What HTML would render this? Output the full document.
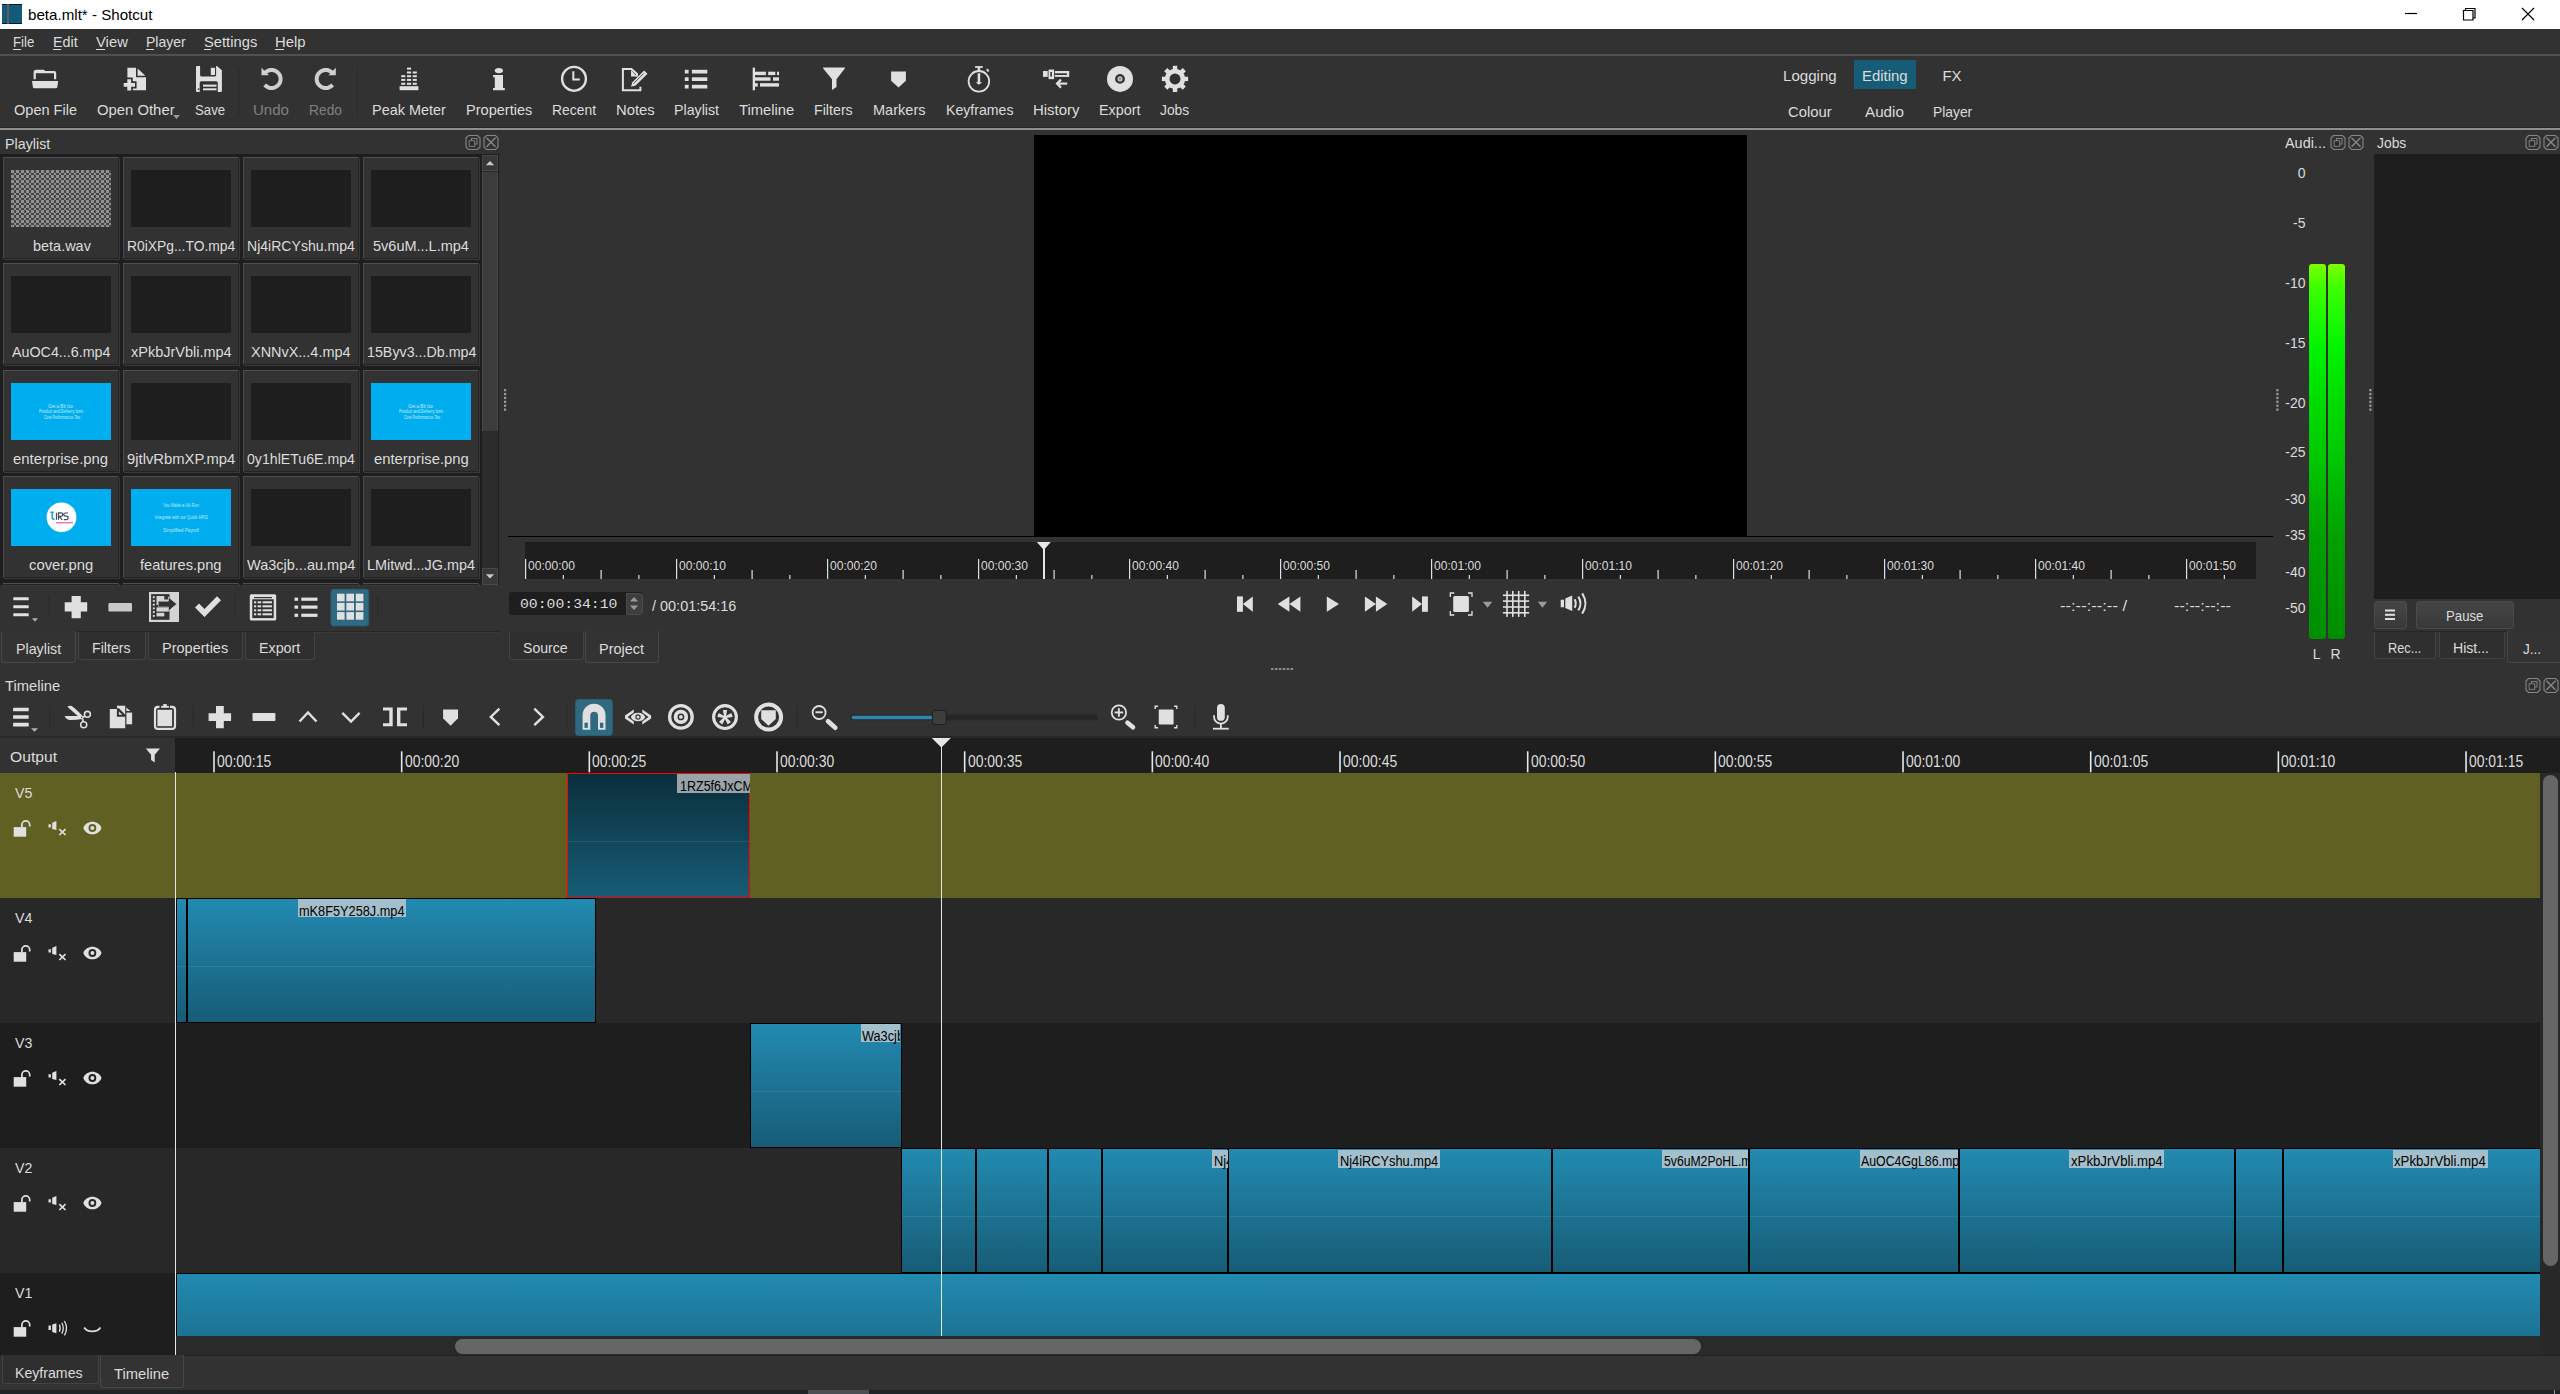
<!DOCTYPE html>
<html><head><meta charset="utf-8">
<style>
*{margin:0;padding:0;box-sizing:border-box}
html,body{width:2560px;height:1394px;overflow:hidden;background:#323232;font-family:"Liberation Sans",sans-serif;color:#dcdcdc;font-size:15px}
.a{position:absolute}
.t{position:absolute;white-space:nowrap;line-height:1}
svg{position:absolute;overflow:visible}
.ic{fill:#dedede}
.ics{fill:none;stroke:#dedede}

</style></head><body>
<div class="a" style="left:0px;top:0px;width:2560px;height:29px;background:#fff;"></div>
<div class="a" style="left:2px;top:4px;width:20px;height:20px;background:#135a78;"></div>
<div class="a" style="left:2px;top:4px;width:20px;height:1px;background:#021a26;"></div>
<div class="a" style="left:2px;top:23px;width:20px;height:1px;background:#021a26;"></div>
<div class="a" style="left:7.1px;top:4px;width:1.7px;height:20px;background:#5e5e5e;"></div>
<div class="t" id="q9a3580f8" style="left:27.50px;top:7.30px;font-size:15px;color:#000;transform:scaleX(1.0089);transform-origin:0 0;">beta.mlt* - Shotcut</div>
<svg style="left:2400px;top:0px" width="140" height="29" viewBox="0 0 140 29"><path d="M5 13.5h12" stroke="#000" stroke-width="1.2"/><path d="M63.5 10.5h9.5v9.5h-9.5z" fill="none" stroke="#000" stroke-width="1.2"/><path d="M65.5 10.5v-2h9.5v9.5h-2" fill="none" stroke="#000" stroke-width="1.2"/><path d="M122 8l12 12M134 8l-12 12" stroke="#000" stroke-width="1.2"/></svg>
<div class="a" style="left:0px;top:29px;width:2560px;height:26px;background:#323232;"></div>
<div class="a" style="left:0px;top:54px;width:2560px;height:2px;background:#505050;"></div>
<div class="t" id="qcb225d25" style="left:13.00px;top:34.20px;font-size:15px;color:#dcdcdc;transform:scaleX(0.8853);transform-origin:0 0;">File</div>
<div class="t" id="q77d34b90" style="left:53.10px;top:34.20px;font-size:15px;color:#dcdcdc;transform:scaleX(0.9532);transform-origin:0 0;">Edit</div>
<div class="t" id="q8d62c638" style="left:96.25px;top:34.20px;font-size:15px;color:#dcdcdc;transform:scaleX(0.9876);transform-origin:0 0;">View</div>
<div class="t" id="qefdce4ab" style="left:146.25px;top:34.20px;font-size:15px;color:#dcdcdc;transform:scaleX(0.9346);transform-origin:0 0;">Player</div>
<div class="t" id="q4b291cfc" style="left:204.00px;top:34.20px;font-size:15px;color:#dcdcdc;transform:scaleX(0.9824);transform-origin:0 0;">Settings</div>
<div class="t" id="q005b2135" style="left:275.00px;top:34.20px;font-size:15px;color:#dcdcdc;transform:scaleX(0.9916);transform-origin:0 0;">Help</div>
<div class="a" style="left:13px;top:48.5px;width:8px;height:1.2px;background:#dcdcdc;"></div>
<div class="a" style="left:53px;top:48.5px;width:8px;height:1.2px;background:#dcdcdc;"></div>
<div class="a" style="left:96px;top:48.5px;width:9px;height:1.2px;background:#dcdcdc;"></div>
<div class="a" style="left:146px;top:48.5px;width:8px;height:1.2px;background:#dcdcdc;"></div>
<div class="a" style="left:204px;top:48.5px;width:7px;height:1.2px;background:#dcdcdc;"></div>
<div class="a" style="left:275px;top:48.5px;width:9px;height:1.2px;background:#dcdcdc;"></div>
<div class="a" style="left:0px;top:56px;width:2560px;height:72px;background:#323232;"></div>
<div class="a" style="left:0px;top:127px;width:2560px;height:1px;background:#262626;"></div>
<div class="a" style="left:0px;top:128px;width:2560px;height:2px;background:#8f8f8f;"></div>
<div class="t" id="q5729dce9" style="left:14.10px;top:102.10px;font-size:15px;color:#dcdcdc;transform:scaleX(0.9685);transform-origin:0 0;">Open File</div>
<div class="t" id="q4e3dcf3e" style="left:96.80px;top:102.10px;font-size:15px;color:#dcdcdc;transform:scaleX(0.9899);transform-origin:0 0;">Open Other</div>
<div class="t" id="qcde547c8" style="left:194.50px;top:102.10px;font-size:15px;color:#dcdcdc;transform:scaleX(0.8800);transform-origin:0 0;">Save</div>
<div class="t" id="q9c9b54ea" style="left:253.10px;top:102.10px;font-size:15px;color:#808080;transform:scaleX(1.0011);transform-origin:0 0;">Undo</div>
<div class="t" id="q52b96bfa" style="left:309.40px;top:102.10px;font-size:15px;color:#808080;transform:scaleX(0.9203);transform-origin:0 0;">Redo</div>
<div class="t" id="q475070a4" style="left:372.00px;top:102.10px;font-size:15px;color:#dcdcdc;transform:scaleX(0.9622);transform-origin:0 0;">Peak Meter</div>
<div class="t" id="q4601468b" style="left:465.50px;top:102.10px;font-size:15px;color:#dcdcdc;transform:scaleX(0.9697);transform-origin:0 0;">Properties</div>
<div class="t" id="q35376d26" style="left:552.00px;top:102.10px;font-size:15px;color:#dcdcdc;transform:scaleX(0.9257);transform-origin:0 0;">Recent</div>
<div class="t" id="qe7d1623c" style="left:615.50px;top:102.10px;font-size:15px;color:#dcdcdc;transform:scaleX(0.9888);transform-origin:0 0;">Notes</div>
<div class="t" id="q750ee475" style="left:674.25px;top:102.10px;font-size:15px;color:#dcdcdc;transform:scaleX(0.9471);transform-origin:0 0;">Playlist</div>
<div class="t" id="qa7fbe4f7" style="left:739.25px;top:102.10px;font-size:15px;color:#dcdcdc;transform:scaleX(0.9841);transform-origin:0 0;">Timeline</div>
<div class="t" id="q50867fec" style="left:814.25px;top:102.10px;font-size:15px;color:#dcdcdc;transform:scaleX(0.9487);transform-origin:0 0;">Filters</div>
<div class="t" id="q155d610d" style="left:873.00px;top:102.10px;font-size:15px;color:#dcdcdc;transform:scaleX(0.9691);transform-origin:0 0;">Markers</div>
<div class="t" id="q13014522" style="left:945.50px;top:102.10px;font-size:15px;color:#dcdcdc;transform:scaleX(0.9414);transform-origin:0 0;">Keyframes</div>
<div class="t" id="q5b00b464" style="left:1033.00px;top:102.10px;font-size:15px;color:#dcdcdc;transform:scaleX(0.9963);transform-origin:0 0;">History</div>
<div class="t" id="q9d05fb1b" style="left:1099.25px;top:102.10px;font-size:15px;color:#dcdcdc;transform:scaleX(0.9571);transform-origin:0 0;">Export</div>
<div class="t" id="qbf7a2658" style="left:1160.00px;top:102.10px;font-size:15px;color:#dcdcdc;transform:scaleX(0.9231);transform-origin:0 0;">Jobs</div>
<svg style="left:173px;top:115px" width="8" height="5" viewBox="0 0 8 5"><path d="M0 0h7l-3.5 4z" fill="#9a9a9a"/></svg>
<div class="a" style="left:238px;top:68px;width:1px;height:48px;background:#2a2a2a;"></div>
<div class="a" style="left:357px;top:68px;width:1px;height:48px;background:#2a2a2a;"></div>
<div class="a" style="left:1854px;top:60px;width:62px;height:29px;background:#175c76;"></div>
<div class="t" id="q4f8a7337" style="left:1783.00px;top:67.90px;font-size:15px;color:#dcdcdc;transform:scaleX(1.0058);transform-origin:0 0;">Logging</div>
<div class="t" id="q995e0ed6" style="left:1862.00px;top:67.90px;font-size:15px;color:#dcdcdc;transform:scaleX(0.9940);transform-origin:0 0;">Editing</div>
<div class="t" id="q6a49b300" style="left:1942.40px;top:67.90px;font-size:15px;color:#dcdcdc;">FX</div>
<div class="t" id="q48e153c5" style="left:1788.00px;top:104.20px;font-size:15px;color:#dcdcdc;transform:scaleX(0.9890);transform-origin:0 0;">Colour</div>
<div class="t" id="q972988d2" style="left:1865.30px;top:104.20px;font-size:15px;color:#dcdcdc;transform:scaleX(1.0137);transform-origin:0 0;">Audio</div>
<div class="t" id="qefdce4ab" style="left:1932.80px;top:104.20px;font-size:15px;color:#dcdcdc;transform:scaleX(0.9217);transform-origin:0 0;">Player</div>
<svg style="left:0px;top:0px" width="1300" height="130" viewBox="0 0 1300 130"><path d="M34.6 79V72.5a1.5 1.5 0 0 1 1.5-1.5H45l0 0 M34.6 79" fill="none"/><path d="M33.6 79.2V72.4q0-2.7 2.7-2.7h6.5q2.2 0 2.2 1.3h9.2q2 0 2 2v6.2h-2.2v-6h-18.2v6z" fill="#e0e0e0"/><path d="M32 80.9h26.2l-0.9 6.2q-0.2 1.2-1.4 1.2h-21.6q-1.2 0-1.4-1.2z" fill="#e0e0e0"/><path d="M127.4 67.8h8.6v9.4h10v13h-18.6z" fill="#e0e0e0"/><path d="M137.6 68.6l7.8 7.2h-7.8z" fill="#e0e0e0"/><path d="M125.6 77.6h7.2v3.6h3.8v7.2h-3.8v3.6h-7.2v-3.6h-3.8v-7.2h3.8z" fill="#323232"/><path d="M127.3 79.3h3.8v3.7h3.9v3.7h-3.9v3.7h-3.8v-3.7h-3.6v-3.7h3.6z" fill="#e0e0e0"/><path d="M197 65.9h20l4.9 4.4v20.7q0 1-1 1h-23.9q-1 0-1-1v-24.1q0-1 1-1z" fill="#e0e0e0"/><path d="M200.1 65.9h16v9q0 1.5-1.5 1.5h-13q-1.5 0-1.5-1.5z" fill="#323232"/><rect x="210.8" y="67.8" width="4.2" height="7.2" fill="#e0e0e0"/><path d="M199.7 92v-9.3q0-1.5 1.5-1.5h15.1q1.5 0 1.5 1.5v9.3z" fill="#323232"/><rect x="203" y="84.6" width="13.5" height="2.1" fill="#e0e0e0"/><rect x="203" y="88.3" width="13.5" height="2" fill="#e0e0e0"/><circle cx="198.5" cy="89.1" r="0.9" fill="#323232"/><path d="M264.71 73.21 L265.46 72.42 L266.31 71.72 L267.24 71.13 L268.23 70.66 L269.27 70.31 L270.35 70.09 L271.44 70.00 L272.54 70.05 L273.62 70.23 L274.68 70.54 L275.69 70.98 L276.63 71.54 L277.50 72.21 L278.29 72.98 L278.97 73.84 L279.55 74.77 L280.00 75.77 L280.33 76.82 L280.53 77.90 L280.60 79.00 L280.53 80.10 L280.33 81.18 L280.00 82.23 L279.55 83.23 L278.97 84.16 L278.29 85.02 L277.50 85.79 L276.63 86.46 L275.69 87.02 L274.68 87.46 L273.62 87.77 L272.54 87.95 L271.44 88.00 L270.35 87.91 L269.27 87.69 L268.23 87.34 L267.24 86.87 L266.31 86.28 L265.46 85.58 L264.71 84.79" fill="none" stroke="#cfcfcf" stroke-width="4"/><path d="M261.5 67.8v7.4h7.4z" fill="#cfcfcf"/><path d="M332.59 73.21 L331.84 72.42 L330.99 71.72 L330.06 71.13 L329.07 70.66 L328.03 70.31 L326.95 70.09 L325.86 70.00 L324.76 70.05 L323.68 70.23 L322.62 70.54 L321.61 70.98 L320.67 71.54 L319.80 72.21 L319.01 72.98 L318.33 73.84 L317.75 74.77 L317.30 75.77 L316.97 76.82 L316.77 77.90 L316.70 79.00 L316.77 80.10 L316.97 81.18 L317.30 82.23 L317.75 83.23 L318.33 84.16 L319.01 85.02 L319.80 85.79 L320.67 86.46 L321.61 87.02 L322.62 87.46 L323.68 87.77 L324.76 87.95 L325.86 88.00 L326.95 87.91 L328.03 87.69 L329.07 87.34 L330.06 86.87 L330.99 86.28 L331.84 85.58 L332.59 84.79" fill="none" stroke="#cfcfcf" stroke-width="4"/><path d="M335.8 67.8v7.4h-7.4z" fill="#cfcfcf"/><rect x="399.6" y="86.2" width="18.8" height="4" fill="#e0e0e0"/><rect x="401.2" y="75.2" width="4.1" height="2" fill="#e0e0e0"/><rect x="401.2" y="78.9" width="4.1" height="2" fill="#e0e0e0"/><rect x="401.2" y="82.8" width="4.1" height="2" fill="#e0e0e0"/><rect x="407" y="67.6" width="4.1" height="2" fill="#e0e0e0"/><rect x="407" y="71.5" width="4.1" height="2" fill="#e0e0e0"/><rect x="407" y="75.2" width="4.1" height="2" fill="#e0e0e0"/><rect x="407" y="78.9" width="4.1" height="2" fill="#e0e0e0"/><rect x="407" y="82.8" width="4.1" height="2" fill="#e0e0e0"/><rect x="412.7" y="71.5" width="4.1" height="2" fill="#e0e0e0"/><rect x="412.7" y="75.2" width="4.1" height="2" fill="#e0e0e0"/><rect x="412.7" y="78.9" width="4.1" height="2" fill="#e0e0e0"/><rect x="412.7" y="82.8" width="4.1" height="2" fill="#e0e0e0"/><ellipse cx="498.9" cy="70.6" rx="4.1" ry="2.6" fill="#e0e0e0"/><path d="M493.1 75h9.9v13h1.8v2.2h-11.7v-2.2h1.7v-10.8h-1.7z" fill="#e0e0e0"/><circle cx="574" cy="78.8" r="11.9" fill="none" stroke="#e0e0e0" stroke-width="2.4"/><path d="M572.3 71.2h2v7.4h5.5v2h-7.5z" fill="#e0e0e0"/><path d="M637 76.5V74l-5.5-5H622.9v21.2h17.5v-3.5" fill="none" stroke="#e0e0e0" stroke-width="2"/><path d="M631 70v6.5h6z" fill="#e0e0e0"/><path d="M631 86.8l1.3-4.6 11.8-11.8 3.4 3.4-11.8 11.8z" fill="#e0e0e0"/><path d="M633.5 83.6l10-10" stroke="#323232" stroke-width="0.8"/><rect x="684.8" y="69.8" width="3.8" height="3.7" fill="#e0e0e0"/><rect x="691.9" y="69.8" width="15.4" height="3.7" fill="#e0e0e0"/><rect x="684.8" y="77.3" width="3.8" height="3.7" fill="#e0e0e0"/><rect x="691.9" y="77.3" width="15.4" height="3.7" fill="#e0e0e0"/><rect x="684.8" y="84.8" width="3.8" height="3.7" fill="#e0e0e0"/><rect x="691.9" y="84.8" width="15.4" height="3.7" fill="#e0e0e0"/><rect x="752.7" y="67.6" width="2.3" height="22.7" fill="#e0e0e0"/><rect x="755" y="71.7" width="10.9" height="3.4" fill="#e0e0e0"/><rect x="768.2" y="71.7" width="7.1" height="3.4" fill="#e0e0e0"/><rect x="777" y="71.7" width="2.0" height="3.4" fill="#e0e0e0"/><rect x="755" y="77.3" width="15.5" height="3.4" fill="#e0e0e0"/><rect x="773" y="77.3" width="6.0" height="3.4" fill="#e0e0e0"/><rect x="755" y="83.2" width="2.8" height="3.4" fill="#e0e0e0"/><rect x="760" y="83.2" width="19.0" height="3.4" fill="#e0e0e0"/><path d="M823.5 67.6h21q1 0 0.3 0.9l-8.3 10.8v7.6l-4.5 3.1v-10.7l-8.8-10.8q-0.6-0.9 0.3-0.9z" fill="#e0e0e0"/><path d="M891.1 71.4h14.8v9.4l-7.4 6.6-7.4-6.6z" fill="#e0e0e0"/><circle cx="978.9" cy="81.3" r="10.3" fill="none" stroke="#e0e0e0" stroke-width="1.8"/><rect x="975.1" y="66.1" width="7.6" height="1.8" fill="#e0e0e0"/><rect x="977.7" y="67.5" width="2.4" height="3.5" fill="#e0e0e0"/><path d="M986 69.8l1.8-1.2 1.6 2.3-1.5 1.2z" fill="#e0e0e0"/><path d="M977.7 73.2h2.5v9.1h2l-3.3 2.4-3.3-2.4h2.1z" fill="#e0e0e0"/><path d="M1043 71h26.2v5.9h-26.2z" fill="#e0e0e0"/><rect x="1054.6" y="73.3" width="12.3" height="1.7" fill="#323232"/><rect x="1048.1" y="69.1" width="6.4" height="10.5" fill="#e0e0e0" stroke="#323232" stroke-width="0.8"/><rect x="1050.3" y="72" width="1.6" height="4.6" fill="#323232"/><path d="M1067.2 83.6h-9" stroke="#e0e0e0" stroke-width="2.2"/><path d="M1061 79.6l-4 4 4 4" fill="none" stroke="#e0e0e0" stroke-width="2.2"/><circle cx="1120" cy="78.9" r="13" fill="#e0e0e0"/><circle cx="1120" cy="78.9" r="4.9" fill="#323232"/><circle cx="1120" cy="78.9" r="2.6" fill="#bdbdbd"/><circle cx="1120" cy="78.9" r="1" fill="#888"/><g transform="translate(1175 78.9)"><rect x="-2.2" y="-13.1" width="4.4" height="6" transform="rotate(0)" fill="#e0e0e0"/><rect x="-2.2" y="-13.1" width="4.4" height="6" transform="rotate(45)" fill="#e0e0e0"/><rect x="-2.2" y="-13.1" width="4.4" height="6" transform="rotate(90)" fill="#e0e0e0"/><rect x="-2.2" y="-13.1" width="4.4" height="6" transform="rotate(135)" fill="#e0e0e0"/><rect x="-2.2" y="-13.1" width="4.4" height="6" transform="rotate(180)" fill="#e0e0e0"/><rect x="-2.2" y="-13.1" width="4.4" height="6" transform="rotate(225)" fill="#e0e0e0"/><rect x="-2.2" y="-13.1" width="4.4" height="6" transform="rotate(270)" fill="#e0e0e0"/><rect x="-2.2" y="-13.1" width="4.4" height="6" transform="rotate(315)" fill="#e0e0e0"/><circle r="10.2" fill="#e0e0e0"/><circle r="5.5" fill="#323232"/></g></svg>
<div class="t" id="q750ee475" style="left:5.10px;top:135.60px;font-size:15px;color:#dcdcdc;transform:scaleX(0.9534);transform-origin:0 0;">Playlist</div>
<svg style="left:0px;top:0px" width="2560" height="160" viewBox="0 0 2560 160"><path d="M468.5 135.5h9l2.5 2.5v9l-2.5 2.5h-9l-2.5-2.5v-9z" fill="none" stroke="#8a8580" stroke-width="1.1"/><rect x="471.5" y="138.5" width="5.5" height="5.5" fill="none" stroke="#8a8580" stroke-width="0.9"/><rect x="469.2" y="140.8" width="5.5" height="5.5" fill="#2a2a2a" stroke="#8a8580" stroke-width="0.9"/><path d="M486.5 135.5h9l2.5 2.5v9l-2.5 2.5h-9l-2.5-2.5v-9z" fill="none" stroke="#8a8580" stroke-width="1.1"/><path d="M486.5 137.8l9 9M495.5 137.8l-9 9" stroke="#8a8580" stroke-width="1.5"/></svg>
<div class="a" style="left:0px;top:154px;width:499px;height:431px;background:#1e1e1e;"></div>
<div class="a" style="left:3px;top:157px;width:116px;height:102px;background:#323232;border-top:1px solid #4f4f4f;border-left:1px solid #4a4a4a;border-right:1px solid #232323;border-bottom:1px solid #232323;box-shadow:1px 1px 0 #393939"></div>
<svg style="left:11px;top:170px" width="100" height="57" viewBox="0 0 100 57"><defs><pattern id="chk" width="5" height="5" patternUnits="userSpaceOnUse"><rect width="5" height="5" fill="#464646"/><rect width="3" height="3" fill="#919191"/><rect x="3" y="3" width="2" height="2" fill="#919191"/></pattern></defs><rect width="100" height="57" fill="url(#chk)"/></svg>
<div class="t" id="q2521f215" style="left:32.50px;top:238.00px;font-size:15px;color:#dcdcdc;transform:scaleX(0.9642);transform-origin:0 0;">beta.wav</div>
<div class="a" style="left:123px;top:157px;width:116px;height:102px;background:#323232;border-top:1px solid #4f4f4f;border-left:1px solid #4a4a4a;border-right:1px solid #232323;border-bottom:1px solid #232323;box-shadow:1px 1px 0 #393939"></div>
<div class="a" style="left:131px;top:170px;width:100px;height:57px;background:#1e1e1e;"></div>
<div class="t" id="q131ded60" style="left:127.00px;top:238.00px;font-size:15px;color:#dcdcdc;transform:scaleX(0.9226);transform-origin:0 0;">R0iXPg...TO.mp4</div>
<div class="a" style="left:243px;top:157px;width:116px;height:102px;background:#323232;border-top:1px solid #4f4f4f;border-left:1px solid #4a4a4a;border-right:1px solid #232323;border-bottom:1px solid #232323;box-shadow:1px 1px 0 #393939"></div>
<div class="a" style="left:251px;top:170px;width:100px;height:57px;background:#1e1e1e;"></div>
<div class="t" id="q1f445431" style="left:247.20px;top:238.00px;font-size:15px;color:#dcdcdc;transform:scaleX(0.9370);transform-origin:0 0;">Nj4iRCYshu.mp4</div>
<div class="a" style="left:363px;top:157px;width:116px;height:102px;background:#323232;border-top:1px solid #4f4f4f;border-left:1px solid #4a4a4a;border-right:1px solid #232323;border-bottom:1px solid #232323;box-shadow:1px 1px 0 #393939"></div>
<div class="a" style="left:371px;top:170px;width:100px;height:57px;background:#1e1e1e;"></div>
<div class="t" id="qd4c21285" style="left:373.30px;top:238.00px;font-size:15px;color:#dcdcdc;transform:scaleX(0.9666);transform-origin:0 0;">5v6uM...L.mp4</div>
<div class="a" style="left:3px;top:263px;width:116px;height:102px;background:#323232;border-top:1px solid #4f4f4f;border-left:1px solid #4a4a4a;border-right:1px solid #232323;border-bottom:1px solid #232323;box-shadow:1px 1px 0 #393939"></div>
<div class="a" style="left:11px;top:276px;width:100px;height:57px;background:#1e1e1e;"></div>
<div class="t" id="q645292a2" style="left:11.80px;top:344.00px;font-size:15px;color:#dcdcdc;transform:scaleX(0.9527);transform-origin:0 0;">AuOC4...6.mp4</div>
<div class="a" style="left:123px;top:263px;width:116px;height:102px;background:#323232;border-top:1px solid #4f4f4f;border-left:1px solid #4a4a4a;border-right:1px solid #232323;border-bottom:1px solid #232323;box-shadow:1px 1px 0 #393939"></div>
<div class="a" style="left:131px;top:276px;width:100px;height:57px;background:#1e1e1e;"></div>
<div class="t" id="qe07f7201" style="left:130.60px;top:344.00px;font-size:15px;color:#dcdcdc;transform:scaleX(0.9654);transform-origin:0 0;">xPkbJrVbli.mp4</div>
<div class="a" style="left:243px;top:263px;width:116px;height:102px;background:#323232;border-top:1px solid #4f4f4f;border-left:1px solid #4a4a4a;border-right:1px solid #232323;border-bottom:1px solid #232323;box-shadow:1px 1px 0 #393939"></div>
<div class="a" style="left:251px;top:276px;width:100px;height:57px;background:#1e1e1e;"></div>
<div class="t" id="q67add593" style="left:251.30px;top:344.00px;font-size:15px;color:#dcdcdc;transform:scaleX(0.9625);transform-origin:0 0;">XNNvX...4.mp4</div>
<div class="a" style="left:363px;top:263px;width:116px;height:102px;background:#323232;border-top:1px solid #4f4f4f;border-left:1px solid #4a4a4a;border-right:1px solid #232323;border-bottom:1px solid #232323;box-shadow:1px 1px 0 #393939"></div>
<div class="a" style="left:371px;top:276px;width:100px;height:57px;background:#1e1e1e;"></div>
<div class="t" id="qfd5b1ac0" style="left:366.60px;top:344.00px;font-size:15px;color:#dcdcdc;transform:scaleX(0.9508);transform-origin:0 0;">15Byv3...Db.mp4</div>
<div class="a" style="left:3px;top:370px;width:116px;height:102px;background:#323232;border-top:1px solid #4f4f4f;border-left:1px solid #4a4a4a;border-right:1px solid #232323;border-bottom:1px solid #232323;box-shadow:1px 1px 0 #393939"></div>
<div class="a" style="left:11px;top:383px;width:100px;height:57px;background:#00aeef;"></div>
<svg style="left:11px;top:383px" width="100" height="57" viewBox="0 0 100 57"><text x="37" y="24.6" textLength="25" lengthAdjust="spacingAndGlyphs" font-size="4.6" fill="#ffffff" opacity="0.75" font-family="Liberation Sans">Get a Bit Ice</text><text x="28" y="30.2" textLength="44" lengthAdjust="spacingAndGlyphs" font-size="4.6" fill="#ffffff" opacity="0.75" font-family="Liberation Sans">Product and Delivery form</text><text x="33" y="35.9" textLength="36" lengthAdjust="spacingAndGlyphs" font-size="4.6" fill="#ffffff" opacity="0.75" font-family="Liberation Sans">Cost Performance Too</text></svg>
<div class="t" id="q362939e5" style="left:13.30px;top:451.00px;font-size:15px;color:#dcdcdc;transform:scaleX(0.9916);transform-origin:0 0;">enterprise.png</div>
<div class="a" style="left:123px;top:370px;width:116px;height:102px;background:#323232;border-top:1px solid #4f4f4f;border-left:1px solid #4a4a4a;border-right:1px solid #232323;border-bottom:1px solid #232323;box-shadow:1px 1px 0 #393939"></div>
<div class="a" style="left:131px;top:383px;width:100px;height:57px;background:#1e1e1e;"></div>
<div class="t" id="qcd730b21" style="left:127.00px;top:451.00px;font-size:15px;color:#dcdcdc;transform:scaleX(0.9865);transform-origin:0 0;">9jtlvRbmXP.mp4</div>
<div class="a" style="left:243px;top:370px;width:116px;height:102px;background:#323232;border-top:1px solid #4f4f4f;border-left:1px solid #4a4a4a;border-right:1px solid #232323;border-bottom:1px solid #232323;box-shadow:1px 1px 0 #393939"></div>
<div class="a" style="left:251px;top:383px;width:100px;height:57px;background:#1e1e1e;"></div>
<div class="t" id="q33637550" style="left:247.20px;top:451.00px;font-size:15px;color:#dcdcdc;transform:scaleX(0.9422);transform-origin:0 0;">0y1hlETu6E.mp4</div>
<div class="a" style="left:363px;top:370px;width:116px;height:102px;background:#323232;border-top:1px solid #4f4f4f;border-left:1px solid #4a4a4a;border-right:1px solid #232323;border-bottom:1px solid #232323;box-shadow:1px 1px 0 #393939"></div>
<div class="a" style="left:371px;top:383px;width:100px;height:57px;background:#00aeef;"></div>
<svg style="left:371px;top:383px" width="100" height="57" viewBox="0 0 100 57"><text x="37" y="24.6" textLength="25" lengthAdjust="spacingAndGlyphs" font-size="4.6" fill="#ffffff" opacity="0.75" font-family="Liberation Sans">Get a Bit Ice</text><text x="28" y="30.2" textLength="44" lengthAdjust="spacingAndGlyphs" font-size="4.6" fill="#ffffff" opacity="0.75" font-family="Liberation Sans">Product and Delivery form</text><text x="33" y="35.9" textLength="36" lengthAdjust="spacingAndGlyphs" font-size="4.6" fill="#ffffff" opacity="0.75" font-family="Liberation Sans">Cost Performance Too</text></svg>
<div class="t" id="q362939e5" style="left:373.50px;top:451.00px;font-size:15px;color:#dcdcdc;transform:scaleX(0.9885);transform-origin:0 0;">enterprise.png</div>
<div class="a" style="left:3px;top:476px;width:116px;height:102px;background:#323232;border-top:1px solid #4f4f4f;border-left:1px solid #4a4a4a;border-right:1px solid #232323;border-bottom:1px solid #232323;box-shadow:1px 1px 0 #393939"></div>
<div class="a" style="left:11px;top:489px;width:100px;height:57px;background:#00aeef;"></div>
<svg style="left:11px;top:489px" width="100" height="57" viewBox="0 0 100 57"><circle cx="50.5" cy="28.3" r="14.9" fill="#fff"/><path d="M39.3 23.3h3.5M41.2 23.5v4.5q0 2.5 2.5 2.5" fill="none" stroke="#29a3dc" stroke-width="1.6"/><path d="M45.5 23.8v7M47.5 30.8v-7h2.5q1.8 0 1.8 1.8t-1.8 1.8h-1.8l3 3.4M57 24h-2.6q-1.6 0-1.6 1.6t1.6 1.6h1.2q1.6 0 1.6 1.6t-1.6 1.8h-2.8" fill="none" stroke="#454a5e" stroke-width="1.2"/><rect x="45" y="33" width="17" height="1.4" fill="#f04a8a" opacity="0.8"/></svg>
<div class="t" id="qc1a21b52" style="left:28.70px;top:557.00px;font-size:15px;color:#dcdcdc;transform:scaleX(0.9885);transform-origin:0 0;">cover.png</div>
<div class="a" style="left:123px;top:476px;width:116px;height:102px;background:#323232;border-top:1px solid #4f4f4f;border-left:1px solid #4a4a4a;border-right:1px solid #232323;border-bottom:1px solid #232323;box-shadow:1px 1px 0 #393939"></div>
<div class="a" style="left:131px;top:489px;width:100px;height:57px;background:#00aeef;"></div>
<svg style="left:131px;top:489px" width="100" height="57" viewBox="0 0 100 57"><text x="32" y="18.2" textLength="36" lengthAdjust="spacingAndGlyphs" font-size="5.2" fill="#ffffff" opacity="0.7" font-family="Liberation Sans">You Make a Hit Run</text><text x="24" y="30.2" textLength="53" lengthAdjust="spacingAndGlyphs" font-size="5.2" fill="#ffffff" opacity="0.7" font-family="Liberation Sans">Integrate with our Quick HRIS</text><text x="32" y="42.8" textLength="36" lengthAdjust="spacingAndGlyphs" font-size="5.2" fill="#ffffff" opacity="0.7" font-family="Liberation Sans">Simplified Payroll</text></svg>
<div class="t" id="qda7a1b84" style="left:140.00px;top:557.00px;font-size:15px;color:#dcdcdc;transform:scaleX(0.9771);transform-origin:0 0;">features.png</div>
<div class="a" style="left:243px;top:476px;width:116px;height:102px;background:#323232;border-top:1px solid #4f4f4f;border-left:1px solid #4a4a4a;border-right:1px solid #232323;border-bottom:1px solid #232323;box-shadow:1px 1px 0 #393939"></div>
<div class="a" style="left:251px;top:489px;width:100px;height:57px;background:#1e1e1e;"></div>
<div class="t" id="q38e7724c" style="left:246.80px;top:557.00px;font-size:15px;color:#dcdcdc;transform:scaleX(0.9670);transform-origin:0 0;">Wa3cjb...au.mp4</div>
<div class="a" style="left:363px;top:476px;width:116px;height:102px;background:#323232;border-top:1px solid #4f4f4f;border-left:1px solid #4a4a4a;border-right:1px solid #232323;border-bottom:1px solid #232323;box-shadow:1px 1px 0 #393939"></div>
<div class="a" style="left:371px;top:489px;width:100px;height:57px;background:#1e1e1e;"></div>
<div class="t" id="q7a713405" style="left:366.80px;top:557.00px;font-size:15px;color:#dcdcdc;transform:scaleX(0.9588);transform-origin:0 0;">LMitwd...JG.mp4</div>
<div class="a" style="left:3px;top:583px;width:116px;height:2px;background:#323232;border-top:1px solid #4f4f4f;border-left:1px solid #4a4a4a;border-right:1px solid #232323;border-bottom:1px solid #232323;box-shadow:1px 1px 0 #393939"></div>
<div class="a" style="left:123px;top:583px;width:116px;height:2px;background:#323232;border-top:1px solid #4f4f4f;border-left:1px solid #4a4a4a;border-right:1px solid #232323;border-bottom:1px solid #232323;box-shadow:1px 1px 0 #393939"></div>
<div class="a" style="left:243px;top:583px;width:116px;height:2px;background:#323232;border-top:1px solid #4f4f4f;border-left:1px solid #4a4a4a;border-right:1px solid #232323;border-bottom:1px solid #232323;box-shadow:1px 1px 0 #393939"></div>
<div class="a" style="left:363px;top:583px;width:116px;height:2px;background:#323232;border-top:1px solid #4f4f4f;border-left:1px solid #4a4a4a;border-right:1px solid #232323;border-bottom:1px solid #232323;box-shadow:1px 1px 0 #393939"></div>
<div class="a" style="left:482px;top:155px;width:16px;height:430px;background:#2c2c2c;"></div>
<div class="a" style="left:482px;top:155px;width:16px;height:16px;background:#383838;border:1px solid #484848"></div>
<svg style="left:482px;top:155px" width="16" height="16" viewBox="0 0 16 16"><path d="M3.8 10.2h8.4l-4.2-4.2z" fill="#c8c8c8"/></svg>
<div class="a" style="left:482px;top:172px;width:16px;height:259px;background:#3c3c3c;border-left:1px solid #4a4a4a;border-right:1px solid #4a4a4a"></div>
<div class="a" style="left:482px;top:568px;width:16px;height:17px;background:#383838;border:1px solid #484848"></div>
<svg style="left:482px;top:568px" width="16" height="17" viewBox="0 0 16 17"><path d="M3.8 6.2h8.4l-4.2 4.2z" fill="#c8c8c8"/></svg>
<svg style="left:503px;top:388px" width="4" height="26" viewBox="0 0 4 26"><rect x="1" y="1.0" width="2.2" height="2.3" fill="#9a9a9a"/><rect x="1" y="4.9" width="2.2" height="2.3" fill="#9a9a9a"/><rect x="1" y="8.8" width="2.2" height="2.3" fill="#9a9a9a"/><rect x="1" y="12.7" width="2.2" height="2.3" fill="#9a9a9a"/><rect x="1" y="16.6" width="2.2" height="2.3" fill="#9a9a9a"/><rect x="1" y="20.5" width="2.2" height="2.3" fill="#9a9a9a"/></svg>
<svg style="left:0px;top:0px" width="520" height="700" viewBox="0 0 520 700"><rect x="13.3" y="597.3" width="15.4" height="3" rx="0.4" fill="#e0e0e0"/><rect x="13.3" y="605.3" width="15.4" height="3" rx="0.4" fill="#e0e0e0"/><rect x="13.3" y="613.3" width="15.4" height="3" rx="0.4" fill="#e0e0e0"/><path d="M32 618.3h6l-3 3.4z" fill="#b0b0b0"/><rect x="48.5" y="595" width="1" height="22" fill="#2a2a2a"/><path d="M71.6 596h9.2v6.2h6.4v9.2h-6.4v6.9h-9.2v-6.9h-6.9v-9.2h6.9z" fill="#e0e0e0"/><rect x="108.4" y="603" width="23.6" height="8.4" rx="1" fill="#c8c8c8"/><rect x="149" y="592" width="30" height="30" fill="#d4d4d4"/><rect x="151.1" y="594.1" width="18.4" height="25.7" fill="#323232"/><rect x="152.8" y="596.2" width="2" height="2" fill="#d4d4d4"/><rect x="152.8" y="599.9" width="2" height="2" fill="#d4d4d4"/><rect x="152.8" y="603.7" width="2" height="2" fill="#d4d4d4"/><rect x="152.8" y="607.4" width="2" height="2" fill="#d4d4d4"/><rect x="152.8" y="611.1" width="2" height="2" fill="#d4d4d4"/><rect x="152.8" y="614.9" width="2" height="2" fill="#d4d4d4"/><path d="M156.5 595.9h7.8v3.5h4.2v1.9h-10v3.8h-2z" fill="#d4d4d4"/><rect x="156.5" y="607.4" width="12" height="4.2" fill="#d4d4d4"/><rect x="156.5" y="612.8" width="7.8" height="3.6" fill="#d4d4d4"/><path d="M158.5 601.3h9.9v-4.2l8.4 7-8.4 7v-4.2h-9.9z" fill="#323232" stroke="#d4d4d4" stroke-width="0.9"/><path d="M158.5 601.8h10.4v-3.5l7 5.8-7 5.8v-3.5h-10.4z" fill="#323232"/><path d="M195 607.5l4-4 5.5 5.5 12.5-12.8 4 4-16.5 16.8z" fill="#e0e0e0"/><rect x="234.5" y="595" width="1" height="22" fill="#2a2a2a"/><rect x="249.8" y="594.2" width="26.4" height="26.4" rx="1.5" fill="#e0e0e0"/><rect x="252.3" y="599.3" width="21.4" height="18.8" fill="#323232"/><rect x="254" y="597" width="18" height="1.2" fill="#323232"/><rect x="254" y="601.3" width="2.2" height="2" fill="#e0e0e0"/><rect x="257.6" y="601.3" width="3.6" height="2" fill="#e0e0e0"/><rect x="262.5" y="601.3" width="9.5" height="2" fill="#e0e0e0"/><rect x="254" y="605.3" width="2.2" height="2" fill="#e0e0e0"/><rect x="257.6" y="605.3" width="3.6" height="2" fill="#e0e0e0"/><rect x="262.5" y="605.3" width="9.5" height="2" fill="#e0e0e0"/><rect x="254" y="609.3" width="2.2" height="2" fill="#e0e0e0"/><rect x="257.6" y="609.3" width="3.6" height="2" fill="#e0e0e0"/><rect x="262.5" y="609.3" width="9.5" height="2" fill="#e0e0e0"/><rect x="254" y="613.3" width="2.2" height="2" fill="#e0e0e0"/><rect x="257.6" y="613.3" width="3.6" height="2" fill="#e0e0e0"/><rect x="262.5" y="613.3" width="9.5" height="2" fill="#e0e0e0"/><rect x="294.5" y="597.6" width="3.6" height="3.2" fill="#e0e0e0"/><rect x="301.3" y="597.6" width="16.2" height="3.2" fill="#e0e0e0"/><rect x="294.5" y="605.5" width="3.6" height="3.2" fill="#e0e0e0"/><rect x="301.3" y="605.5" width="16.2" height="3.2" fill="#e0e0e0"/><rect x="294.5" y="613.7" width="3.6" height="3.2" fill="#e0e0e0"/><rect x="301.3" y="613.7" width="16.2" height="3.2" fill="#e0e0e0"/><rect x="331" y="589.3" width="37.7" height="36.6" rx="2.5" fill="#2f6a80" stroke="#285e72" stroke-width="1"/><rect x="337.0" y="593.7" width="7.6" height="7.6" fill="#e0e0e0"/><rect x="337.0" y="602.9" width="7.6" height="7.6" fill="#e0e0e0"/><rect x="337.0" y="612.1" width="7.6" height="7.6" fill="#e0e0e0"/><rect x="346.4" y="593.7" width="7.6" height="7.6" fill="#e0e0e0"/><rect x="346.4" y="602.9" width="7.6" height="7.6" fill="#e0e0e0"/><rect x="346.4" y="612.1" width="7.6" height="7.6" fill="#e0e0e0"/><rect x="355.8" y="593.7" width="7.6" height="7.6" fill="#e0e0e0"/><rect x="355.8" y="602.9" width="7.6" height="7.6" fill="#e0e0e0"/><rect x="355.8" y="612.1" width="7.6" height="7.6" fill="#e0e0e0"/><rect x="377.2" y="595" width="1" height="22" fill="#2a2a2a"/></svg>
<div class="a" style="left:0px;top:631px;width:499px;height:1px;background:#262626;"></div>
<div class="a" style="left:0px;top:632px;width:499px;height:1px;background:#3a3a3a;"></div>
<div class="a" style="left:1.1px;top:631px;width:74.7px;height:32px;background:#333333;border:1px solid #474747;border-top:none;border-radius:0 0 3px 3px"></div>
<div class="t" id="q750ee475" style="left:15.60px;top:640.60px;font-size:15px;color:#dcdcdc;transform:scaleX(0.9513);transform-origin:0 0;">Playlist</div>
<div class="a" style="left:78px;top:632px;width:67.80000000000001px;height:28px;background:#2f2f2f;border:1px solid #434343;border-top:none;border-radius:0 0 3px 3px"></div>
<div class="t" id="q50867fec" style="left:91.80px;top:640.00px;font-size:15px;color:#dcdcdc;transform:scaleX(0.9451);transform-origin:0 0;">Filters</div>
<div class="a" style="left:148px;top:632px;width:94.9px;height:28px;background:#2f2f2f;border:1px solid #434343;border-top:none;border-radius:0 0 3px 3px"></div>
<div class="t" id="q4601468b" style="left:161.80px;top:640.00px;font-size:15px;color:#dcdcdc;transform:scaleX(0.9682);transform-origin:0 0;">Properties</div>
<div class="a" style="left:245.2px;top:632px;width:69.80000000000001px;height:28px;background:#2f2f2f;border:1px solid #434343;border-top:none;border-radius:0 0 3px 3px"></div>
<div class="t" id="q9d05fb1b" style="left:259.40px;top:640.00px;font-size:15px;color:#dcdcdc;transform:scaleX(0.9525);transform-origin:0 0;">Export</div>
<div class="a" style="left:508px;top:536px;width:1765px;height:1px;background:#000;"></div>
<div class="a" style="left:1034px;top:135px;width:713px;height:401px;background:#000;"></div>
<div class="a" style="left:525px;top:542px;width:1731px;height:37px;background:#1e1e1e;"></div>
<svg style="left:0px;top:0px" width="2560" height="700" viewBox="0 0 2560 700"><rect x="525.00" y="559" width="1.2" height="20" fill="#e0e0e0"/><rect x="562.75" y="575" width="1.2" height="4" fill="#e0e0e0"/><rect x="600.50" y="570" width="1.2" height="9" fill="#e0e0e0"/><rect x="638.25" y="575" width="1.2" height="4" fill="#e0e0e0"/><rect x="676.00" y="559" width="1.2" height="20" fill="#e0e0e0"/><rect x="713.75" y="575" width="1.2" height="4" fill="#e0e0e0"/><rect x="751.50" y="570" width="1.2" height="9" fill="#e0e0e0"/><rect x="789.25" y="575" width="1.2" height="4" fill="#e0e0e0"/><rect x="827.00" y="559" width="1.2" height="20" fill="#e0e0e0"/><rect x="864.75" y="575" width="1.2" height="4" fill="#e0e0e0"/><rect x="902.50" y="570" width="1.2" height="9" fill="#e0e0e0"/><rect x="940.25" y="575" width="1.2" height="4" fill="#e0e0e0"/><rect x="978.00" y="559" width="1.2" height="20" fill="#e0e0e0"/><rect x="1015.75" y="575" width="1.2" height="4" fill="#e0e0e0"/><rect x="1053.50" y="570" width="1.2" height="9" fill="#e0e0e0"/><rect x="1091.25" y="575" width="1.2" height="4" fill="#e0e0e0"/><rect x="1129.00" y="559" width="1.2" height="20" fill="#e0e0e0"/><rect x="1166.75" y="575" width="1.2" height="4" fill="#e0e0e0"/><rect x="1204.50" y="570" width="1.2" height="9" fill="#e0e0e0"/><rect x="1242.25" y="575" width="1.2" height="4" fill="#e0e0e0"/><rect x="1280.00" y="559" width="1.2" height="20" fill="#e0e0e0"/><rect x="1317.75" y="575" width="1.2" height="4" fill="#e0e0e0"/><rect x="1355.50" y="570" width="1.2" height="9" fill="#e0e0e0"/><rect x="1393.25" y="575" width="1.2" height="4" fill="#e0e0e0"/><rect x="1431.00" y="559" width="1.2" height="20" fill="#e0e0e0"/><rect x="1468.75" y="575" width="1.2" height="4" fill="#e0e0e0"/><rect x="1506.50" y="570" width="1.2" height="9" fill="#e0e0e0"/><rect x="1544.25" y="575" width="1.2" height="4" fill="#e0e0e0"/><rect x="1582.00" y="559" width="1.2" height="20" fill="#e0e0e0"/><rect x="1619.75" y="575" width="1.2" height="4" fill="#e0e0e0"/><rect x="1657.50" y="570" width="1.2" height="9" fill="#e0e0e0"/><rect x="1695.25" y="575" width="1.2" height="4" fill="#e0e0e0"/><rect x="1733.00" y="559" width="1.2" height="20" fill="#e0e0e0"/><rect x="1770.75" y="575" width="1.2" height="4" fill="#e0e0e0"/><rect x="1808.50" y="570" width="1.2" height="9" fill="#e0e0e0"/><rect x="1846.25" y="575" width="1.2" height="4" fill="#e0e0e0"/><rect x="1884.00" y="559" width="1.2" height="20" fill="#e0e0e0"/><rect x="1921.75" y="575" width="1.2" height="4" fill="#e0e0e0"/><rect x="1959.50" y="570" width="1.2" height="9" fill="#e0e0e0"/><rect x="1997.25" y="575" width="1.2" height="4" fill="#e0e0e0"/><rect x="2035.00" y="559" width="1.2" height="20" fill="#e0e0e0"/><rect x="2072.75" y="575" width="1.2" height="4" fill="#e0e0e0"/><rect x="2110.50" y="570" width="1.2" height="9" fill="#e0e0e0"/><rect x="2148.25" y="575" width="1.2" height="4" fill="#e0e0e0"/><rect x="2186.00" y="559" width="1.2" height="20" fill="#e0e0e0"/><rect x="2223.75" y="575" width="1.2" height="4" fill="#e0e0e0"/><path d="M1036.8 542h14l-7 8z" fill="#e8e8e8"/><rect x="1043" y="549" width="2" height="30" fill="#e8e8e8"/></svg>
<div class="t" id="qd26ef1d0" style="left:527.50px;top:559.00px;font-size:13px;color:#dcdcdc;transform:scaleX(0.9267);transform-origin:0 0;">00:00:00</div>
<div class="t" id="q458e36b2" style="left:678.50px;top:559.00px;font-size:13px;color:#dcdcdc;transform:scaleX(0.9267);transform-origin:0 0;">00:00:10</div>
<div class="t" id="q3ab0585f" style="left:829.50px;top:559.00px;font-size:13px;color:#dcdcdc;transform:scaleX(0.9267);transform-origin:0 0;">00:00:20</div>
<div class="t" id="q4bc28fae" style="left:980.50px;top:559.00px;font-size:13px;color:#dcdcdc;transform:scaleX(0.9267);transform-origin:0 0;">00:00:30</div>
<div class="t" id="q3e1a2778" style="left:1131.50px;top:559.00px;font-size:13px;color:#dcdcdc;transform:scaleX(0.9267);transform-origin:0 0;">00:00:40</div>
<div class="t" id="qd856f1f1" style="left:1282.50px;top:559.00px;font-size:13px;color:#dcdcdc;transform:scaleX(0.9267);transform-origin:0 0;">00:00:50</div>
<div class="t" id="q3b0fe48f" style="left:1433.50px;top:559.00px;font-size:13px;color:#dcdcdc;transform:scaleX(0.9267);transform-origin:0 0;">00:01:00</div>
<div class="t" id="q55301d0f" style="left:1584.50px;top:559.00px;font-size:13px;color:#dcdcdc;transform:scaleX(0.9267);transform-origin:0 0;">00:01:10</div>
<div class="t" id="q0a034182" style="left:1735.50px;top:559.00px;font-size:13px;color:#dcdcdc;transform:scaleX(0.9267);transform-origin:0 0;">00:01:20</div>
<div class="t" id="q053e13f4" style="left:1886.50px;top:559.00px;font-size:13px;color:#dcdcdc;transform:scaleX(0.9267);transform-origin:0 0;">00:01:30</div>
<div class="t" id="qda8531e3" style="left:2037.50px;top:559.00px;font-size:13px;color:#dcdcdc;transform:scaleX(0.9267);transform-origin:0 0;">00:01:40</div>
<div class="t" id="q05681f3b" style="left:2188.50px;top:559.00px;font-size:13px;color:#dcdcdc;transform:scaleX(0.9267);transform-origin:0 0;">00:01:50</div>
<div class="a" style="left:509px;top:592px;width:134px;height:23px;background:#1e1e1e;border-radius:3px"></div>
<div class="a" style="left:626px;top:592.5px;width:17px;height:22.5px;background:#3e3e3e;border-radius:0 3px 3px 0;border:1px solid #4a4a4a"></div>
<svg style="left:626px;top:593px" width="16" height="21" viewBox="0 0 16 21"><path d="M4 8.5h8l-4-4.5z" fill="#9a9a9a"/><path d="M4 12.5h8l-4 4.5z" fill="#9a9a9a"/></svg>
<div class="t" id="qed935a63" style="left:519.80px;top:598.39px;font-size:13.6px;color:#dcdcdc;font-family:'Liberation Mono',monospace;transform:scaleX(1.0854);transform-origin:0 0;">00:00:34:10</div>
<div class="t" id="q04c01bf5" style="left:651.60px;top:597.90px;font-size:15px;color:#dcdcdc;transform:scaleX(0.9637);transform-origin:0 0;">/ 00:01:54:16</div>
<svg style="left:0px;top:0px" width="2560" height="700" viewBox="0 0 2560 700"><rect x="1237" y="596.4" width="5.9" height="15.4" fill="#e0e0e0"/><path d="M1242.9 604.1l9.9-7.7v15.4z" fill="#e0e0e0"/><path d="M1277.7 604.1l11.7-7.7v15.4z M1289.4 604.1l11-7.7v15.4z" fill="#e0e0e0"/><path d="M1326.8 596.6l12.2 7.5-12.2 7.7z" fill="#e0e0e0"/><path d="M1364.9 596.4l11 7.7-11 7.7z M1375.9 596.4l11.4 7.7-11.4 7.7z" fill="#e0e0e0"/><path d="M1412.2 596.4l9.8 7.7-9.8 7.7z" fill="#e0e0e0"/><rect x="1422" y="596.4" width="5.9" height="15.4" fill="#e0e0e0"/><rect x="1453.2" y="596" width="15.7" height="16.1" rx="1.5" fill="#e0e0e0"/><path d="M1450.3 597v-4h4 M1472 597v-4h-4 M1450.3 611v4h4 M1472 611v4h-4" fill="none" stroke="#e0e0e0" stroke-width="1.3"/><path d="M1482.8 601.8h9.5l-4.75 5.9z" fill="#9a9a9a"/><rect x="1506.2" y="590.9" width="1.6" height="26" fill="#e0e0e0"/><rect x="1512.0" y="590.9" width="1.6" height="26" fill="#e0e0e0"/><rect x="1517.9" y="590.9" width="1.6" height="26" fill="#e0e0e0"/><rect x="1524.0" y="590.9" width="1.6" height="26" fill="#e0e0e0"/><rect x="1502.9" y="594.5" width="26.3" height="1.6" fill="#e0e0e0"/><rect x="1502.9" y="600.3" width="26.3" height="1.6" fill="#e0e0e0"/><rect x="1502.9" y="606.2" width="26.3" height="1.6" fill="#e0e0e0"/><rect x="1502.9" y="612.0" width="26.3" height="1.6" fill="#e0e0e0"/><path d="M1537.7 601.8h9.5l-4.75 5.9z" fill="#9a9a9a"/><path d="M1560.7 599.8h3.3v7.4h-3.3z M1565.3 598.6l6.9-3.1v15.6l-6.9-3z" fill="#e0e0e0"/><path d="M1574.6 599.3q2.4 4.2 0 8.4 M1578.3 596.6q4.4 6.9 0 13.8 M1582.2 593.4q6.6 10.1 0 20.2" fill="none" stroke="#e0e0e0" stroke-width="2"/></svg>
<div class="t" id="q7eaae7c9" style="left:2060.30px;top:599.45px;font-size:14px;color:#dcdcdc;transform:scaleX(1.1824);transform-origin:0 0;">--:--:--:-- /</div>
<div class="t" id="q2d970719" style="left:2173.80px;top:599.45px;font-size:14px;color:#dcdcdc;transform:scaleX(1.1640);transform-origin:0 0;">--:--:--:--</div>
<div class="a" style="left:509px;top:632px;width:75px;height:28px;background:#2f2f2f;border:1px solid #434343;border-top:none;border-radius:0 0 3px 3px"></div>
<div class="t" id="q80c8f1cc" style="left:523.40px;top:640.10px;font-size:15px;color:#dcdcdc;transform:scaleX(0.9404);transform-origin:0 0;">Source</div>
<div class="a" style="left:585px;top:631px;width:74px;height:32px;background:#333333;border:1px solid #474747;border-top:none;border-radius:0 0 3px 3px"></div>
<div class="t" id="qa90fff10" style="left:599.40px;top:640.70px;font-size:15px;color:#dcdcdc;transform:scaleX(0.9639);transform-origin:0 0;">Project</div>
<svg style="left:1270px;top:667px" width="25" height="4" viewBox="0 0 25 4"><rect x="1.0" y="1" width="2.6" height="2" fill="#8a8a8a"/><rect x="4.9" y="1" width="2.6" height="2" fill="#8a8a8a"/><rect x="8.8" y="1" width="2.6" height="2" fill="#8a8a8a"/><rect x="12.7" y="1" width="2.6" height="2" fill="#8a8a8a"/><rect x="16.6" y="1" width="2.6" height="2" fill="#8a8a8a"/><rect x="20.5" y="1" width="2.6" height="2" fill="#8a8a8a"/></svg>
<div class="t" id="q98f2ee2c" style="left:2285.00px;top:135.20px;font-size:15px;color:#dcdcdc;transform:scaleX(0.9616);transform-origin:0 0;">Audi...</div>
<div class="t" id="qbf7a2658" style="left:2377.20px;top:135.20px;font-size:15px;color:#dcdcdc;transform:scaleX(0.9247);transform-origin:0 0;">Jobs</div>
<svg style="left:0px;top:0px" width="2560" height="160" viewBox="0 0 2560 160"><path d="M2333.5 135.5h9l2.5 2.5v9l-2.5 2.5h-9l-2.5-2.5v-9z" fill="none" stroke="#8a8580" stroke-width="1.1"/><rect x="2336.5" y="138.5" width="5.5" height="5.5" fill="none" stroke="#8a8580" stroke-width="0.9"/><rect x="2334.2" y="140.8" width="5.5" height="5.5" fill="#2a2a2a" stroke="#8a8580" stroke-width="0.9"/><path d="M2351.5 135.5h9l2.5 2.5v9l-2.5 2.5h-9l-2.5-2.5v-9z" fill="none" stroke="#8a8580" stroke-width="1.1"/><path d="M2351.5 137.8l9 9M2360.5 137.8l-9 9" stroke="#8a8580" stroke-width="1.5"/><path d="M2528.5 135.5h9l2.5 2.5v9l-2.5 2.5h-9l-2.5-2.5v-9z" fill="none" stroke="#8a8580" stroke-width="1.1"/><rect x="2531.5" y="138.5" width="5.5" height="5.5" fill="none" stroke="#8a8580" stroke-width="0.9"/><rect x="2529.2" y="140.8" width="5.5" height="5.5" fill="#2a2a2a" stroke="#8a8580" stroke-width="0.9"/><path d="M2546.5 135.5h9l2.5 2.5v9l-2.5 2.5h-9l-2.5-2.5v-9z" fill="none" stroke="#8a8580" stroke-width="1.1"/><path d="M2546.5 137.8l9 9M2555.5 137.8l-9 9" stroke="#8a8580" stroke-width="1.5"/></svg>
<div class="t" style="right:254.5px;top:165.95px;font-size:14px;color:#dcdcdc">0</div>
<div class="t" style="right:254.5px;top:216.15px;font-size:14px;color:#dcdcdc">-5</div>
<div class="t" style="right:254.5px;top:276.35px;font-size:14px;color:#dcdcdc">-10</div>
<div class="t" style="right:254.5px;top:336.45px;font-size:14px;color:#dcdcdc">-15</div>
<div class="t" style="right:254.5px;top:395.75px;font-size:14px;color:#dcdcdc">-20</div>
<div class="t" style="right:254.5px;top:445.15px;font-size:14px;color:#dcdcdc">-25</div>
<div class="t" style="right:254.5px;top:492.15px;font-size:14px;color:#dcdcdc">-30</div>
<div class="t" style="right:254.5px;top:528.25px;font-size:14px;color:#dcdcdc">-35</div>
<div class="t" style="right:254.5px;top:564.85px;font-size:14px;color:#dcdcdc">-40</div>
<div class="t" style="right:254.5px;top:600.95px;font-size:14px;color:#dcdcdc">-50</div>
<div class="a" style="left:2308.7px;top:263.7px;width:17.2px;height:375px;background:linear-gradient(to bottom,#7cff00 0px,#3cff00 24px,#00f400 84px,#00dc00 136px,#00c800 193px,#00b000 240px,#00a000 276px,#009200 349px,#008e00 375px);border-radius:3px"></div>
<div class="a" style="left:2327.5px;top:263.7px;width:17.5px;height:375px;background:linear-gradient(to bottom,#7cff00 0px,#3cff00 24px,#00f400 84px,#00dc00 136px,#00c800 193px,#00b000 240px,#00a000 276px,#009200 349px,#008e00 375px);border-radius:3px"></div>
<div class="t" id="q9f9632ae" style="left:2312.80px;top:647.35px;font-size:14px;color:#dcdcdc;">L</div>
<div class="t" id="qe895e39d" style="left:2330.60px;top:647.35px;font-size:14px;color:#dcdcdc;">R</div>
<svg style="left:2276px;top:388px" width="4" height="26" viewBox="0 0 4 26"><rect x="0.3" y="1.0" width="2.2" height="2.3" fill="#9a9a9a"/><rect x="0.3" y="4.9" width="2.2" height="2.3" fill="#9a9a9a"/><rect x="0.3" y="8.8" width="2.2" height="2.3" fill="#9a9a9a"/><rect x="0.3" y="12.7" width="2.2" height="2.3" fill="#9a9a9a"/><rect x="0.3" y="16.6" width="2.2" height="2.3" fill="#9a9a9a"/><rect x="0.3" y="20.5" width="2.2" height="2.3" fill="#9a9a9a"/></svg>
<svg style="left:2369px;top:388px" width="4" height="26" viewBox="0 0 4 26"><rect x="0.3" y="1.0" width="2.2" height="2.3" fill="#9a9a9a"/><rect x="0.3" y="4.9" width="2.2" height="2.3" fill="#9a9a9a"/><rect x="0.3" y="8.8" width="2.2" height="2.3" fill="#9a9a9a"/><rect x="0.3" y="12.7" width="2.2" height="2.3" fill="#9a9a9a"/><rect x="0.3" y="16.6" width="2.2" height="2.3" fill="#9a9a9a"/><rect x="0.3" y="20.5" width="2.2" height="2.3" fill="#9a9a9a"/></svg>
<div class="a" style="left:2374px;top:154px;width:186px;height:445px;background:#1e1e1e;"></div>
<div class="a" style="left:2374.3px;top:601px;width:32.3px;height:28px;background:linear-gradient(#464646,#383838);border:1px solid #4a4a4a;border-radius:3px"></div>
<svg style="left:2374px;top:601px" width="33" height="28" viewBox="0 0 33 28"><rect x="11" y="8.5" width="10" height="2" fill="#e0e0e0"/><rect x="11" y="12.8" width="10" height="2" fill="#e0e0e0"/><rect x="11" y="17" width="10" height="2" fill="#e0e0e0"/></svg>
<div class="a" style="left:2416.1px;top:601px;width:97.5px;height:28px;background:linear-gradient(#464646,#383838);border:1px solid #4a4a4a;border-radius:3px"></div>
<div class="t" id="qbc3204d1" style="left:2446.00px;top:607.80px;font-size:15px;color:#dcdcdc;transform:scaleX(0.8790);transform-origin:0 0;">Pause</div>
<div class="a" style="left:2373px;top:631px;width:187px;height:1px;background:#262626;"></div>
<div class="a" style="left:2374.3px;top:632px;width:62px;height:27px;background:#2f2f2f;border:1px solid #434343;border-top:none;border-radius:0 0 3px 3px"></div>
<div class="t" id="q0d8c05d2" style="left:2388.00px;top:640.10px;font-size:15px;color:#dcdcdc;transform:scaleX(0.8498);transform-origin:0 0;">Rec...</div>
<div class="a" style="left:2439px;top:632px;width:66px;height:27px;background:#2f2f2f;border:1px solid #434343;border-top:none;border-radius:0 0 3px 3px"></div>
<div class="t" id="qa469e6ca" style="left:2453.00px;top:640.10px;font-size:15px;color:#dcdcdc;transform:scaleX(0.9389);transform-origin:0 0;">Hist...</div>
<div class="a" style="left:2507px;top:631px;width:56px;height:32px;background:#333333;border:1px solid #474747;border-top:none;border-radius:0 0 3px 3px"></div>
<div class="t" id="q94dcfce4" style="left:2523.40px;top:640.70px;font-size:15px;color:#dcdcdc;transform:scaleX(0.9043);transform-origin:0 0;">J...</div>
<div class="t" id="qa7fbe4f7" style="left:5.30px;top:678.20px;font-size:15px;color:#dcdcdc;transform:scaleX(0.9832);transform-origin:0 0;">Timeline</div>
<svg style="left:0px;top:0px" width="2560" height="740" viewBox="0 0 2560 740"><path d="M2528.5 678.5h9l2.5 2.5v9l-2.5 2.5h-9l-2.5-2.5v-9z" fill="none" stroke="#8a8580" stroke-width="1.1"/><rect x="2531.5" y="681.5" width="5.5" height="5.5" fill="none" stroke="#8a8580" stroke-width="0.9"/><rect x="2529.2" y="683.8" width="5.5" height="5.5" fill="#2a2a2a" stroke="#8a8580" stroke-width="0.9"/><path d="M2546.5 678.5h9l2.5 2.5v9l-2.5 2.5h-9l-2.5-2.5v-9z" fill="none" stroke="#8a8580" stroke-width="1.1"/><path d="M2546.5 680.8l9 9M2555.5 680.8l-9 9" stroke="#8a8580" stroke-width="1.5"/><rect x="13.1" y="707.7" width="15.6" height="3.6" rx="0.5" fill="#e0e0e0"/><rect x="13.1" y="715.2" width="15.6" height="3.6" rx="0.5" fill="#e0e0e0"/><rect x="13.1" y="722.8" width="15.6" height="3.6" rx="0.5" fill="#e0e0e0"/><path d="M31 728.2h7l-3.5 3.5z" fill="#b0b0b0"/><rect x="49.2" y="705.5" width="1" height="22" fill="#2a2a2a"/><rect x="192.8" y="705.5" width="1" height="22" fill="#2a2a2a"/><rect x="422.8" y="705.5" width="1" height="22" fill="#2a2a2a"/><rect x="566.5" y="705.5" width="1" height="22" fill="#2a2a2a"/><rect x="796.8" y="705.5" width="1" height="22" fill="#2a2a2a"/><rect x="1194.7" y="705.5" width="1" height="22" fill="#2a2a2a"/><path d="M67.6 706.9Q68.5 705.3 71.5 706.1Q74 707 82.6 716.1L80.3 718.3z" fill="#e0e0e0"/><path d="M64.6 716.1L80.6 716.1L82.3 718.9Q75 720.1 69.5 719.9Q66 719.5 64.6 716.1z" fill="#e0e0e0"/><circle cx="87.4" cy="714.3" r="2.95" fill="none" stroke="#e0e0e0" stroke-width="1.55"/><circle cx="83.7" cy="724.7" r="3.05" fill="none" stroke="#e0e0e0" stroke-width="1.55"/><path d="M81.6 717.6l3.5-1.4M82.4 718.4l0.9 3.2" stroke="#e0e0e0" stroke-width="1.7"/><circle cx="81.5" cy="717.4" r="0.55" fill="#323232"/><rect x="117" y="705.7" width="8.2" height="18.6" fill="#e0e0e0"/><rect x="126.4" y="712.6" width="5.7" height="11.7" fill="#e0e0e0"/><path d="M126.4 707.6l3.9 3.5h-3.9z" fill="#e0e0e0"/><path d="M109 708.3h9.9l7.1 7.1v13.7h-17z" fill="#323232"/><path d="M109.8 709.1h7.1v7.7h8.3v11.5h-15.4z" fill="#e0e0e0"/><path d="M118.9 711.4l3.5 3.4h-3.5z" fill="#e0e0e0"/><rect x="155" y="706.8" width="20" height="22.1" rx="3" fill="none" stroke="#e0e0e0" stroke-width="2.2"/><rect x="157.4" y="709.7" width="14.7" height="16.5" fill="#e0e0e0"/><rect x="159.5" y="704.5" width="10.4" height="4.9" fill="#323232"/><rect x="161.1" y="705.9" width="7.8" height="1.9" fill="#e0e0e0"/><rect x="163.2" y="704" width="3.6" height="2.2" rx="0.8" fill="#e0e0e0"/><path d="M216 706.1h7.8v7.1h7.3v7.8h-7.3v7.2h-7.8v-7.2h-7.4v-7.8h7.4z" fill="#e0e0e0"/><rect x="252.5" y="712.9" width="22.9" height="8.1" rx="0.8" fill="#e0e0e0"/><path d="M299.5 721.5l8.5-9 8.5 9" fill="none" stroke="#e0e0e0" stroke-width="2.4"/><path d="M342.3 712.9l8.7 8.6 8.6-8.6" fill="none" stroke="#e0e0e0" stroke-width="2.4"/><path d="M383 707.5h9.7v18.8h-9.7v-3h6.3v-12.8h-6.3z" fill="#e0e0e0"/><path d="M407 707.5h-10v18.8h10v-3h-6.6v-12.8h6.6z" fill="#e0e0e0"/><path d="M443.1 709.4h14.9v8.8l-7.45 7.5-7.45-7.5z" fill="#e0e0e0"/><path d="M499.4 708.6l-8.6 8.3 8.6 8.3" fill="none" stroke="#e0e0e0" stroke-width="2.4"/><path d="M534.3 708.6l8.6 8.3-8.6 8.3" fill="none" stroke="#e0e0e0" stroke-width="2.4"/><rect x="575.4" y="699.4" width="37" height="36.1" rx="3" fill="#2f6a80" stroke="#285e72" stroke-width="1"/><path d="M582.6 729.8v-14.6a11.45 11.45 0 0 1 22.9 0v14.6h-7.5v-14.3a3.85 3.85 0 0 0 -7.7 0v14.3z" fill="#e0e0e0"/><rect x="584.5" y="722.7" width="3.3" height="5.2" fill="#2f6a80"/><rect x="600" y="722.7" width="3.3" height="5.2" fill="#2f6a80"/><path d="M630.8 717C633 711.2 643.1 711.2 645.3 717C643.1 722.8 633 722.8 630.8 717z" fill="#e0e0e0"/><circle cx="638" cy="717" r="2.7" fill="#323232"/><circle cx="638" cy="717" r="1.5" fill="#e0e0e0"/><path d="M633.8 709.4l-8.8 6v3.2l8.8 5.8v-2.9l-6.2-4.5 6.2-4.6z" fill="#e0e0e0"/><path d="M642.3 709.4l8.8 6v3.2l-8.8 5.8v-2.9l6.2-4.5-6.2-4.6z" fill="#e0e0e0"/><circle cx="680.9" cy="716.9" r="11.3" fill="none" stroke="#e0e0e0" stroke-width="3.3"/><circle cx="680.9" cy="716.9" r="5.3" fill="none" stroke="#e0e0e0" stroke-width="3.8"/><circle cx="680.9" cy="716.9" r="1.9" fill="#e0e0e0"/><circle cx="725" cy="717.05" r="11.4" fill="none" stroke="#e0e0e0" stroke-width="3.1"/><g transform="translate(725 717.3)"><circle r="1.6" fill="#e0e0e0"/><path d="M-0.8 0L-2.1 -7.4h4.2L0.8 0z" transform="rotate(0)" fill="#e0e0e0"/><path d="M-0.8 0L-2.1 -7.4h4.2L0.8 0z" transform="rotate(72)" fill="#e0e0e0"/><path d="M-0.8 0L-2.1 -7.4h4.2L0.8 0z" transform="rotate(144)" fill="#e0e0e0"/><path d="M-0.8 0L-2.1 -7.4h4.2L0.8 0z" transform="rotate(216)" fill="#e0e0e0"/><path d="M-0.8 0L-2.1 -7.4h4.2L0.8 0z" transform="rotate(288)" fill="#e0e0e0"/></g><circle cx="768.6" cy="717.05" r="12.5" fill="none" stroke="#e0e0e0" stroke-width="4"/><path d="M761.2 710.2h14.6v8.8l-7.3 6.8-7.3-6.8z" fill="#e0e0e0"/><circle cx="819.1" cy="712.5" r="6.5" fill="none" stroke="#e0e0e0" stroke-width="1.8"/><rect x="815.5" y="711.3" width="7.2" height="1.9" fill="#e0e0e0"/><path d="M828 721.2l7.3 6.6" stroke="#e0e0e0" stroke-width="4.6" stroke-linecap="round"/><rect x="850.6" y="714.5" width="246.9" height="5.8" rx="2.9" fill="#262626"/><rect x="851.6" y="715.7" width="82" height="3.6" rx="1.8" fill="#2a88ad"/><rect x="932.4" y="710.3" width="13.8" height="14.2" rx="2.5" fill="#3d3d3d" stroke="#1f1f1f" stroke-width="1"/><circle cx="1118.9" cy="712.5" r="7.2" fill="none" stroke="#e0e0e0" stroke-width="1.8"/><rect x="1114.6" y="711.5" width="8.6" height="1.9" fill="#e0e0e0"/><rect x="1117.9" y="708.2" width="1.9" height="8.6" fill="#e0e0e0"/><path d="M1127.5 722.7l5.5 4.6" stroke="#e0e0e0" stroke-width="4.6" stroke-linecap="round"/><rect x="1158.75" y="709.5" width="14.85" height="14.9" rx="1" fill="#e0e0e0"/><path d="M1155.2 709v-2.8h2.8 M1176.8 709v-2.8h-2.8 M1155.2 725v2.8h2.8 M1176.8 725v2.8h-2.8" fill="none" stroke="#e0e0e0" stroke-width="1.4"/><rect x="1217" y="703.9" width="7.8" height="16.9" rx="3.9" fill="#e0e0e0"/><path d="M1214 715.3v1.5a6.9 6.9 0 0 0 13.8 0v-1.5" fill="none" stroke="#e0e0e0" stroke-width="1.8"/><rect x="1220" y="723.5" width="1.8" height="4.5" fill="#e0e0e0"/><rect x="1213" y="727.8" width="15.75" height="1.8" fill="#e0e0e0"/></svg>
<div class="a" style="left:0px;top:736px;width:2560px;height:1px;background:#262626;"></div>
<div class="a" style="left:0px;top:737px;width:2560px;height:1px;background:#2c2c2c;"></div>
<div class="a" style="left:0px;top:738px;width:175px;height:35px;background:#323232;"></div>
<div class="t" id="q5e305cf8" style="left:10.00px;top:749.30px;font-size:15px;color:#dcdcdc;transform:scaleX(1.0437);transform-origin:0 0;">Output</div>
<svg style="left:145px;top:748px" width="16" height="15" viewBox="0 0 16 15"><path d="M0.8 0.5h14.2l-5.3 6.3v7.7l-3.6-2.6v-5.1z" fill="#e0e0e0"/></svg>
<div class="a" style="left:175px;top:738px;width:2385px;height:35px;background:#1e1e1e;"></div>
<svg style="left:0px;top:0px" width="2560" height="780" viewBox="0 0 2560 780"><rect x="213.20" y="751.3" width="1.6" height="21" fill="#e8e8e8"/><rect x="400.87" y="751.3" width="1.6" height="21" fill="#e8e8e8"/><rect x="588.54" y="751.3" width="1.6" height="21" fill="#e8e8e8"/><rect x="776.21" y="751.3" width="1.6" height="21" fill="#e8e8e8"/><rect x="963.88" y="751.3" width="1.6" height="21" fill="#e8e8e8"/><rect x="1151.55" y="751.3" width="1.6" height="21" fill="#e8e8e8"/><rect x="1339.22" y="751.3" width="1.6" height="21" fill="#e8e8e8"/><rect x="1526.89" y="751.3" width="1.6" height="21" fill="#e8e8e8"/><rect x="1714.56" y="751.3" width="1.6" height="21" fill="#e8e8e8"/><rect x="1902.23" y="751.3" width="1.6" height="21" fill="#e8e8e8"/><rect x="2089.90" y="751.3" width="1.6" height="21" fill="#e8e8e8"/><rect x="2277.57" y="751.3" width="1.6" height="21" fill="#e8e8e8"/><rect x="2465.24" y="751.3" width="1.6" height="21" fill="#e8e8e8"/></svg>
<div class="t" id="q3b8daba2" style="left:217.00px;top:753.66px;font-size:16px;color:#dcdcdc;transform:scaleX(0.8702);transform-origin:0 0;">00:00:15</div>
<div class="t" id="q8788db5e" style="left:404.67px;top:753.66px;font-size:16px;color:#dcdcdc;transform:scaleX(0.8702);transform-origin:0 0;">00:00:20</div>
<div class="t" id="qadc8ee5c" style="left:592.34px;top:753.66px;font-size:16px;color:#dcdcdc;transform:scaleX(0.8702);transform-origin:0 0;">00:00:25</div>
<div class="t" id="q319a9f8a" style="left:780.01px;top:753.66px;font-size:16px;color:#dcdcdc;transform:scaleX(0.8702);transform-origin:0 0;">00:00:30</div>
<div class="t" id="q9258b216" style="left:967.68px;top:753.66px;font-size:16px;color:#dcdcdc;transform:scaleX(0.8702);transform-origin:0 0;">00:00:35</div>
<div class="t" id="qdcb54850" style="left:1155.35px;top:753.66px;font-size:16px;color:#dcdcdc;transform:scaleX(0.8702);transform-origin:0 0;">00:00:40</div>
<div class="t" id="q928600b3" style="left:1343.02px;top:753.66px;font-size:16px;color:#dcdcdc;transform:scaleX(0.8702);transform-origin:0 0;">00:00:45</div>
<div class="t" id="qf4ebc9c7" style="left:1530.69px;top:753.66px;font-size:16px;color:#dcdcdc;transform:scaleX(0.8702);transform-origin:0 0;">00:00:50</div>
<div class="t" id="qb4a94b1f" style="left:1718.36px;top:753.66px;font-size:16px;color:#dcdcdc;transform:scaleX(0.8702);transform-origin:0 0;">00:00:55</div>
<div class="t" id="qc59fca5d" style="left:1906.03px;top:753.66px;font-size:16px;color:#dcdcdc;transform:scaleX(0.8702);transform-origin:0 0;">00:01:00</div>
<div class="t" id="q84c7be05" style="left:2093.70px;top:753.66px;font-size:16px;color:#dcdcdc;transform:scaleX(0.8702);transform-origin:0 0;">00:01:05</div>
<div class="t" id="q66cc595a" style="left:2281.37px;top:753.66px;font-size:16px;color:#dcdcdc;transform:scaleX(0.8702);transform-origin:0 0;">00:01:10</div>
<div class="t" id="qc96b6ad7" style="left:2469.04px;top:753.66px;font-size:16px;color:#dcdcdc;transform:scaleX(0.8702);transform-origin:0 0;">00:01:15</div>
<div class="a" style="left:0px;top:773px;width:175px;height:125px;background:#606023;"></div>
<div class="a" style="left:176px;top:773px;width:2364px;height:125px;background:#606023;"></div>
<div class="t" id="q7e918522" style="left:14.70px;top:785.20px;font-size:15px;color:#dcdcdc;transform:scaleX(0.9477);transform-origin:0 0;">V5</div>
<div class="a" style="left:0px;top:898px;width:175px;height:125px;background:#282828;"></div>
<div class="a" style="left:176px;top:898px;width:2364px;height:125px;background:#282828;"></div>
<div class="t" id="q9daf3b65" style="left:14.70px;top:910.20px;font-size:15px;color:#dcdcdc;transform:scaleX(0.9477);transform-origin:0 0;">V4</div>
<div class="a" style="left:0px;top:1023px;width:175px;height:125px;background:#1e1e1e;"></div>
<div class="a" style="left:176px;top:1023px;width:2364px;height:125px;background:#1e1e1e;"></div>
<div class="t" id="q016b7805" style="left:14.70px;top:1035.20px;font-size:15px;color:#dcdcdc;transform:scaleX(0.9477);transform-origin:0 0;">V3</div>
<div class="a" style="left:0px;top:1148px;width:175px;height:125px;background:#282828;"></div>
<div class="a" style="left:176px;top:1148px;width:2364px;height:125px;background:#282828;"></div>
<div class="t" id="qe1e8f45b" style="left:14.70px;top:1160.20px;font-size:15px;color:#dcdcdc;transform:scaleX(0.9477);transform-origin:0 0;">V2</div>
<div class="a" style="left:0px;top:1273px;width:175px;height:82px;background:#1e1e1e;"></div>
<div class="a" style="left:176px;top:1273px;width:2364px;height:63px;background:#1e1e1e;"></div>
<div class="t" id="qfbf89267" style="left:14.70px;top:1285.20px;font-size:15px;color:#dcdcdc;transform:scaleX(0.9477);transform-origin:0 0;">V1</div>
<div class="a" style="left:176px;top:1336px;width:2384px;height:19px;background:#2a2a2a;"></div>
<div class="a" style="left:0px;top:1336px;width:175px;height:19px;background:#1e1e1e;"></div>
<div class="a" style="left:455px;top:1338.5px;width:1246px;height:15px;background:#666;border-radius:7.5px"></div>
<div class="a" style="left:2540px;top:773px;width:20px;height:582px;background:#282828;"></div>
<div class="a" style="left:2542.6px;top:775px;width:15.2px;height:491px;background:#666;border-radius:7.5px"></div>
<svg style="left:0px;top:0px" width="180" height="1394" viewBox="0 0 180 1394"><rect x="13.7" y="827.1" width="12.5" height="9.6" fill="#e0e0e0"/><path d="M21.9 827.5v-2.7a3.9 3.9 0 0 1 7.8 0v1.6" fill="none" stroke="#e0e0e0" stroke-width="1.7"/><path d="M48.5 824.2h2.4v3.4h-2.4z M52.2 822.8l4.2-1.7v8.9l-4.2-1.1z" fill="#e0e0e0"/><path d="M59.3 829.2l6.2 5.8M65.5 829.2l-6.2 5.8" stroke="#e0e0e0" stroke-width="1.7"/><path d="M83.3 828.0C86.2 819.6 98.6 819.6 101.5 828C98.6 836.4 86.2 836.4 83.3 828z" fill="#e0e0e0" transform="translate(0 0)"/><circle cx="92.4" cy="828.0" r="3.9" fill="#606023"/><circle cx="92.4" cy="828.0" r="2" fill="#e0e0e0"/><rect x="13.7" y="952.1" width="12.5" height="9.6" fill="#e0e0e0"/><path d="M21.9 952.5v-2.7a3.9 3.9 0 0 1 7.8 0v1.6" fill="none" stroke="#e0e0e0" stroke-width="1.7"/><path d="M48.5 949.2h2.4v3.4h-2.4z M52.2 947.8l4.2-1.7v8.9l-4.2-1.1z" fill="#e0e0e0"/><path d="M59.3 954.2l6.2 5.8M65.5 954.2l-6.2 5.8" stroke="#e0e0e0" stroke-width="1.7"/><path d="M83.3 828.0C86.2 819.6 98.6 819.6 101.5 828C98.6 836.4 86.2 836.4 83.3 828z" fill="#e0e0e0" transform="translate(0 125)"/><circle cx="92.4" cy="953.0" r="3.9" fill="#282828"/><circle cx="92.4" cy="953.0" r="2" fill="#e0e0e0"/><rect x="13.7" y="1077.1" width="12.5" height="9.6" fill="#e0e0e0"/><path d="M21.9 1077.5v-2.7a3.9 3.9 0 0 1 7.8 0v1.6" fill="none" stroke="#e0e0e0" stroke-width="1.7"/><path d="M48.5 1074.2h2.4v3.4h-2.4z M52.2 1072.8l4.2-1.7v8.9l-4.2-1.1z" fill="#e0e0e0"/><path d="M59.3 1079.2l6.2 5.8M65.5 1079.2l-6.2 5.8" stroke="#e0e0e0" stroke-width="1.7"/><path d="M83.3 828.0C86.2 819.6 98.6 819.6 101.5 828C98.6 836.4 86.2 836.4 83.3 828z" fill="#e0e0e0" transform="translate(0 250)"/><circle cx="92.4" cy="1078.0" r="3.9" fill="#1e1e1e"/><circle cx="92.4" cy="1078.0" r="2" fill="#e0e0e0"/><rect x="13.7" y="1202.1" width="12.5" height="9.6" fill="#e0e0e0"/><path d="M21.9 1202.5v-2.7a3.9 3.9 0 0 1 7.8 0v1.6" fill="none" stroke="#e0e0e0" stroke-width="1.7"/><path d="M48.5 1199.2h2.4v3.4h-2.4z M52.2 1197.8l4.2-1.7v8.9l-4.2-1.1z" fill="#e0e0e0"/><path d="M59.3 1204.2l6.2 5.8M65.5 1204.2l-6.2 5.8" stroke="#e0e0e0" stroke-width="1.7"/><path d="M83.3 828.0C86.2 819.6 98.6 819.6 101.5 828C98.6 836.4 86.2 836.4 83.3 828z" fill="#e0e0e0" transform="translate(0 375)"/><circle cx="92.4" cy="1203.0" r="3.9" fill="#282828"/><circle cx="92.4" cy="1203.0" r="2" fill="#e0e0e0"/><rect x="13.7" y="1327.1" width="12.5" height="9.6" fill="#e0e0e0"/><path d="M21.9 1327.5v-2.7a3.9 3.9 0 0 1 7.8 0v1.6" fill="none" stroke="#e0e0e0" stroke-width="1.7"/><path d="M48.5 1325.6h2.4v4.4h-2.4z M52.2 1324.4l4.2-1.2v10l-4.2-1.3z" fill="#e0e0e0"/><path d="M59.3 1324.6q1.8 3.6 0 7.2 M61.8 1322.8q3 5.4 0 10.8 M64.4 1321q4.2 7.2 0 14.4" fill="none" stroke="#e0e0e0" stroke-width="1.3"/><path d="M84.2 1327.5a9 7 0 0 0 16.2 0" fill="none" stroke="#e0e0e0" stroke-width="1.7"/></svg>
<div class="a" style="left:567px;top:773px;width:183px;height:125px;overflow:hidden;border:1px solid #ff0000"><div style="position:absolute;left:0;top:0;width:100%;height:123px;background:linear-gradient(to bottom,#0b2e3b,#175c76)"></div><div style="position:absolute;left:0;top:67px;width:100%;height:1px;background:rgba(255,255,255,0.09)"></div></div>
<div class="a" style="left:677px;top:774px;width:73px;height:19px;background:#98a4aa;"></div>
<div class="a" style="left:176px;top:898px;width:11px;height:125px;overflow:hidden;border:1px solid #000"><div style="position:absolute;left:0;top:0;width:100%;height:123px;background:linear-gradient(to bottom,#228ab1,#175c76)"></div><div style="position:absolute;left:0;top:67px;width:100%;height:1px;background:rgba(255,255,255,0.09)"></div></div>
<div class="a" style="left:187px;top:898px;width:409px;height:125px;overflow:hidden;border:1px solid #000"><div style="position:absolute;left:0;top:0;width:100%;height:123px;background:linear-gradient(to bottom,#228ab1,#175c76)"></div><div style="position:absolute;left:0;top:67px;width:100%;height:1px;background:rgba(255,255,255,0.09)"></div></div>
<div class="a" style="left:298px;top:899px;width:108px;height:18px;background:#a3bfcb;"></div>
<div class="a" style="left:750px;top:1023px;width:151.5px;height:125px;overflow:hidden;border:1px solid #000"><div style="position:absolute;left:0;top:0;width:100%;height:123px;background:linear-gradient(to bottom,#228ab1,#175c76)"></div><div style="position:absolute;left:0;top:67px;width:100%;height:1px;background:rgba(255,255,255,0.09)"></div></div>
<div class="a" style="left:860.7px;top:1024px;width:39.799999999999955px;height:18px;background:#a3bfcb;"></div>
<div class="a" style="left:901px;top:1148px;width:75px;height:125px;overflow:hidden;border:1px solid #000"><div style="position:absolute;left:0;top:0;width:100%;height:123px;background:linear-gradient(to bottom,#228ab1,#175c76)"></div><div style="position:absolute;left:0;top:67px;width:100%;height:1px;background:rgba(255,255,255,0.09)"></div></div>
<div class="a" style="left:976px;top:1148px;width:72px;height:125px;overflow:hidden;border:1px solid #000"><div style="position:absolute;left:0;top:0;width:100%;height:123px;background:linear-gradient(to bottom,#228ab1,#175c76)"></div><div style="position:absolute;left:0;top:67px;width:100%;height:1px;background:rgba(255,255,255,0.09)"></div></div>
<div class="a" style="left:1048px;top:1148px;width:54px;height:125px;overflow:hidden;border:1px solid #000"><div style="position:absolute;left:0;top:0;width:100%;height:123px;background:linear-gradient(to bottom,#228ab1,#175c76)"></div><div style="position:absolute;left:0;top:67px;width:100%;height:1px;background:rgba(255,255,255,0.09)"></div></div>
<div class="a" style="left:1102px;top:1148px;width:126px;height:125px;overflow:hidden;border:1px solid #000"><div style="position:absolute;left:0;top:0;width:100%;height:123px;background:linear-gradient(to bottom,#228ab1,#175c76)"></div><div style="position:absolute;left:0;top:67px;width:100%;height:1px;background:rgba(255,255,255,0.09)"></div></div>
<div class="a" style="left:1228px;top:1148px;width:324px;height:125px;overflow:hidden;border:1px solid #000"><div style="position:absolute;left:0;top:0;width:100%;height:123px;background:linear-gradient(to bottom,#228ab1,#175c76)"></div><div style="position:absolute;left:0;top:67px;width:100%;height:1px;background:rgba(255,255,255,0.09)"></div></div>
<div class="a" style="left:1552px;top:1148px;width:197px;height:125px;overflow:hidden;border:1px solid #000"><div style="position:absolute;left:0;top:0;width:100%;height:123px;background:linear-gradient(to bottom,#228ab1,#175c76)"></div><div style="position:absolute;left:0;top:67px;width:100%;height:1px;background:rgba(255,255,255,0.09)"></div></div>
<div class="a" style="left:1749px;top:1148px;width:210px;height:125px;overflow:hidden;border:1px solid #000"><div style="position:absolute;left:0;top:0;width:100%;height:123px;background:linear-gradient(to bottom,#228ab1,#175c76)"></div><div style="position:absolute;left:0;top:67px;width:100%;height:1px;background:rgba(255,255,255,0.09)"></div></div>
<div class="a" style="left:1959px;top:1148px;width:276px;height:125px;overflow:hidden;border:1px solid #000"><div style="position:absolute;left:0;top:0;width:100%;height:123px;background:linear-gradient(to bottom,#228ab1,#175c76)"></div><div style="position:absolute;left:0;top:67px;width:100%;height:1px;background:rgba(255,255,255,0.09)"></div></div>
<div class="a" style="left:2235px;top:1148px;width:48px;height:125px;overflow:hidden;border:1px solid #000"><div style="position:absolute;left:0;top:0;width:100%;height:123px;background:linear-gradient(to bottom,#228ab1,#175c76)"></div><div style="position:absolute;left:0;top:67px;width:100%;height:1px;background:rgba(255,255,255,0.09)"></div></div>
<div class="a" style="left:2283px;top:1148px;width:260px;height:125px;overflow:hidden;border:1px solid #000"><div style="position:absolute;left:0;top:0;width:100%;height:123px;background:linear-gradient(to bottom,#228ab1,#175c76)"></div><div style="position:absolute;left:0;top:67px;width:100%;height:1px;background:rgba(255,255,255,0.09)"></div></div>
<div class="a" style="left:1212px;top:1150px;width:15.5px;height:18px;background:#a3bfcb;"></div>
<div class="a" style="left:1338.1px;top:1150px;width:101.70000000000005px;height:18px;background:#a3bfcb;"></div>
<div class="a" style="left:1662.2px;top:1150px;width:86.29999999999995px;height:18px;background:#a3bfcb;"></div>
<div class="a" style="left:1859.5px;top:1150px;width:98.5px;height:18px;background:#a3bfcb;"></div>
<div class="a" style="left:2069.1px;top:1150px;width:94.59999999999991px;height:18px;background:#a3bfcb;"></div>
<div class="a" style="left:2392.6px;top:1150px;width:95.09999999999991px;height:18px;background:#a3bfcb;"></div>
<div class="a" style="left:176px;top:1273px;width:2367px;height:63px;overflow:hidden;border:1px solid #000;border-bottom:none"><div style="position:absolute;left:0;top:0;width:100%;height:124px;background:linear-gradient(to bottom,#228ab1,#175c76)"></div></div>
<div class="a" style="left:677px;top:773px;width:72.5px;height:22px;overflow:hidden"><div class="t" id="qff841e14" style="left:3.00px;top:5.65px;font-size:14px;color:#000;transform:scaleX(0.8936);transform-origin:0 0;">1RZ5f6JxCM</div>
</div>
<div class="a" style="left:298px;top:898px;width:108px;height:22px;overflow:hidden"><div class="t" id="q790096ce" style="left:1.20px;top:5.65px;font-size:14px;color:#000;transform:scaleX(0.9099);transform-origin:0 0;">mK8F5Y258J.mp4</div>
</div>
<div class="a" style="left:860.7px;top:1023px;width:39.299999999999955px;height:22px;overflow:hidden"><div class="t" id="qa7c253ff" style="left:1.50px;top:6.05px;font-size:14px;color:#000;transform:scaleX(0.9092);transform-origin:0 0;">Wa3cjbgSau.mp4</div>
</div>
<div class="a" style="left:1212px;top:1148px;width:15.5px;height:22px;overflow:hidden"><div class="t" id="q7e129fe0" style="left:1.50px;top:6.05px;font-size:14px;color:#000;transform:scaleX(0.9146);transform-origin:0 0;">Nj4iRCYshu.mp4</div>
</div>
<div class="a" style="left:1338px;top:1148px;width:102px;height:22px;overflow:hidden"><div class="t" id="q7e129fe0" style="left:1.60px;top:6.05px;font-size:14px;color:#000;transform:scaleX(0.9146);transform-origin:0 0;">Nj4iRCYshu.mp4</div>
</div>
<div class="a" style="left:1662.2px;top:1148px;width:86.29999999999995px;height:22px;overflow:hidden"><div class="t" id="q6837fa22" style="left:1.40px;top:6.05px;font-size:14px;color:#000;transform:scaleX(0.8710);transform-origin:0 0;">5v6uM2PoHL.mp4</div>
</div>
<div class="a" style="left:1859.5px;top:1148px;width:98.5px;height:22px;overflow:hidden"><div class="t" id="qea514cae" style="left:1.50px;top:6.05px;font-size:14px;color:#000;transform:scaleX(0.8818);transform-origin:0 0;">AuOC4GgL86.mp4</div>
</div>
<div class="a" style="left:2069.1px;top:1148px;width:94.59999999999991px;height:22px;overflow:hidden"><div class="t" id="q94a8bb5e" style="left:1.50px;top:6.05px;font-size:14px;color:#000;transform:scaleX(0.9428);transform-origin:0 0;">xPkbJrVbli.mp4</div>
</div>
<div class="a" style="left:2392.6px;top:1148px;width:95.09999999999991px;height:22px;overflow:hidden"><div class="t" id="q94a8bb5e" style="left:1.50px;top:6.05px;font-size:14px;color:#000;transform:scaleX(0.9438);transform-origin:0 0;">xPkbJrVbli.mp4</div>
</div>
<div class="a" style="left:2540px;top:773px;width:20px;height:582px;background:#282828;"></div>
<div class="a" style="left:2542.6px;top:775px;width:15.2px;height:491px;background:#666;border-radius:7.5px"></div>
<div class="a" style="left:175px;top:772px;width:1px;height:583px;background:#e6e6e6;"></div>
<div class="a" style="left:941px;top:746px;width:1px;height:590px;background:#e6e6e6;"></div>
<svg style="left:0px;top:0px" width="2560" height="760" viewBox="0 0 2560 760"><path d="M931.8 738h19.1l-9.55 9.6z" fill="#e6e6e6"/></svg>
<div class="a" style="left:0px;top:1354.5px;width:2560px;height:1.2px;background:#232323;"></div>
<div class="a" style="left:1.5px;top:1355px;width:97.5px;height:29.4px;background:#2f2f2f;border:1px solid #434343;border-top:none;border-radius:0 0 3px 3px"></div>
<div class="t" id="q13014522" style="left:15.40px;top:1365.10px;font-size:15px;color:#dcdcdc;transform:scaleX(0.9428);transform-origin:0 0;">Keyframes</div>
<div class="a" style="left:100.3px;top:1355px;width:83.5px;height:32.8px;background:#333333;border:1px solid #474747;border-top:none;border-radius:0 0 3px 3px"></div>
<div class="t" id="qa7fbe4f7" style="left:114.40px;top:1366.05px;font-size:15px;color:#dcdcdc;transform:scaleX(0.9850);transform-origin:0 0;">Timeline</div>
<div class="a" style="left:0px;top:1390px;width:2560px;height:4px;background:#1f2425;"></div>
<div class="a" style="left:808px;top:1390px;width:61px;height:4px;background:#4a5050;"></div>
<div class="a" style="left:2554px;top:1390px;width:1px;height:4px;background:#9a9a9a;"></div>

</body></html>
